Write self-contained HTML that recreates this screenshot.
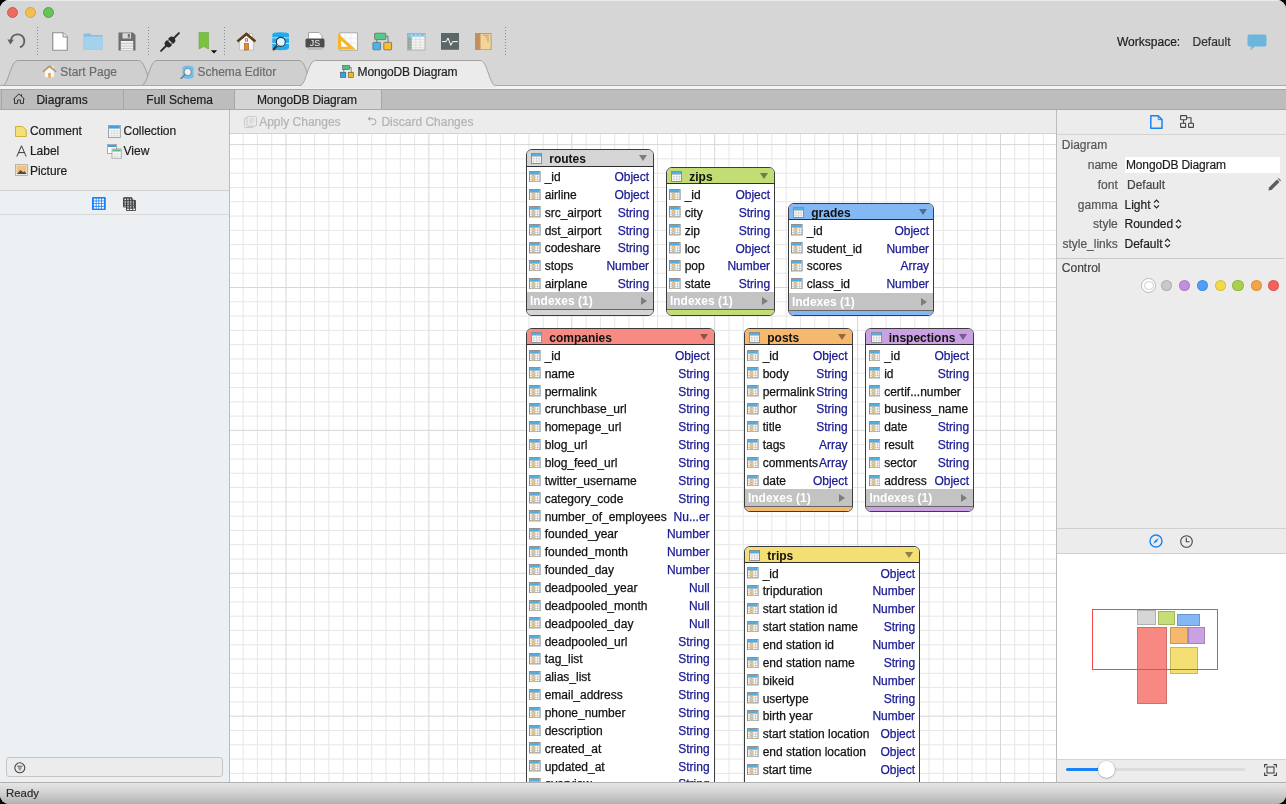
<!DOCTYPE html>
<html><head><meta charset="utf-8">
<style>
*{margin:0;padding:0;box-sizing:border-box}
html,body{width:1286px;height:804px;overflow:hidden;background:#000}
body{font-family:"Liberation Sans", sans-serif;font-size:12px;color:#222;position:relative}
.abs{position:absolute}
#win{position:absolute;left:0;top:0;width:1286px;height:804px;background:#d6d6d6;border-radius:9px;overflow:hidden;will-change:transform}
.tbl{position:absolute;background:#fff;border:1.5px solid #3c3c3c;border-radius:6px;overflow:hidden}
.hdr{position:absolute;left:0;top:0;right:0;border-bottom:1.2px solid #2e2e2e}
.htxt{position:absolute;font-weight:bold;font-size:12px;color:#111;padding-top:1px}
.tri{position:absolute;width:0;height:0;border-left:4px solid transparent;border-right:4px solid transparent;border-top:6px solid #777}
.rtxt,.rtyp{position:absolute;line-height:17.86px;font-size:12px;white-space:nowrap;padding-top:1.6px;-webkit-text-stroke:0.25px currentColor}
.rtxt{color:#111}
.rtyp{color:#1a1a92}
.idx{position:absolute;left:0;right:0;background:#c3c3c3;color:#fff;font-weight:bold;font-size:12px;line-height:18px;padding-left:3.2px;border-bottom:1px solid #666}
.itri{position:absolute;width:0;height:0;border-top:4px solid transparent;border-bottom:4px solid transparent;border-left:6px solid #7d7d7d}
.strip{position:absolute;left:0;right:0;height:6px}
.t13{font-size:12px}
#win div.abs{-webkit-text-stroke:0.2px currentColor}
</style></head><body>

<div id="win">

<div class="abs" style="left:0;top:0;width:1286px;height:60px;background:#d6d6d6"></div>
<div class="abs" style="left:0;top:0;width:1286px;height:1.2px;background:#ececec"></div>
<div class="abs" style="left:6.8999999999999995px;top:6.8px;width:11.6px;height:11.6px;border-radius:50%;background:#ee6a5f;border:0.5px solid #d55a50"></div>
<div class="abs" style="left:24.7px;top:6.8px;width:11.6px;height:11.6px;border-radius:50%;background:#f5be4f;border:0.5px solid #d9a43f"></div>
<div class="abs" style="left:42.5px;top:6.8px;width:11.6px;height:11.6px;border-radius:50%;background:#62c555;border:0.5px solid #51a846"></div>
<div class="abs" style="left:37.0px;top:27px;width:1px;height:28px;background:repeating-linear-gradient(#8a8a8a 0 1px,transparent 1px 3px)"></div>
<div class="abs" style="left:147.5px;top:27px;width:1px;height:28px;background:repeating-linear-gradient(#8a8a8a 0 1px,transparent 1px 3px)"></div>
<div class="abs" style="left:224.2px;top:27px;width:1px;height:28px;background:repeating-linear-gradient(#8a8a8a 0 1px,transparent 1px 3px)"></div>
<div class="abs" style="left:504.9px;top:27px;width:1px;height:28px;background:repeating-linear-gradient(#8a8a8a 0 1px,transparent 1px 3px)"></div>

<svg class="abs" style="left:6px;top:32px" width="21" height="18" viewBox="0 0 21 18">
 <path d="M5.0 8.0 A6.7 6.7 0 1 1 14.0 15.3" fill="none" stroke="#5f5f5f" stroke-width="1.9"/>
 <path d="M1.4 7.6 L7.8 7.8 L4.4 12.6 Z" fill="#5f5f5f"/>
</svg>
<svg class="abs" style="left:52px;top:32px" width="16" height="19" viewBox="0 0 16 19">
 <path d="M0.75 0.75 H11 L15.25 5 V18.25 H0.75 Z" fill="#fff" stroke="#8f8f8f" stroke-width="1.2"/>
 <path d="M11 0.75 V5 H15.25" fill="#f2f2f2" stroke="#8f8f8f" stroke-width="1"/>
</svg>
<svg class="abs" style="left:83px;top:33px" width="20" height="17" viewBox="0 0 20 17">
 <path d="M0.5 1.5 Q0.5 0.5 1.5 0.5 H7 L8.5 2 H18.5 Q19.5 2 19.5 3 V15.8 Q19.5 16.8 18.5 16.8 H1.5 Q0.5 16.8 0.5 15.8 Z" fill="#86bfe0"/>
 <path d="M0.5 3.6 H19.5 V15.8 Q19.5 16.8 18.5 16.8 H1.5 Q0.5 16.8 0.5 15.8 Z" fill="#a4d2ec"/>
</svg>
<svg class="abs" style="left:118px;top:32px" width="18" height="19" viewBox="0 0 18 19">
 <path d="M0.5 0.5 H15 L17.5 3 V18.5 H0.5 Z" fill="#6e6e6e"/>
 <rect x="4.5" y="1.2" width="8.5" height="5.3" fill="#d8d8d8"/>
 <rect x="9.8" y="2" width="2" height="3.6" fill="#6e6e6e"/>
 <rect x="2.8" y="9" width="12.4" height="9.5" fill="#efefef"/>
 <path d="M3 11.5 H15 M3 14 H15 M3 16.5 H15" stroke="#c2c2c2" stroke-width="0.8"/>
</svg>
<svg class="abs" style="left:160px;top:32px" width="20" height="20" viewBox="0 0 20 20">
 <g transform="rotate(-45 10 10)">
  <path d="M-2.6 10 H5 M15 10 H22.6" stroke="#2b2b2b" stroke-width="1.9" stroke-linecap="round"/>
  <path d="M4.2 10 Q4.2 6.4 7.2 6.4 H9.4 V13.6 H7.2 Q4.2 13.6 4.2 10 Z" fill="#2b2b2b"/>
  <path d="M15.8 10 Q15.8 6.4 12.8 6.4 H10.8 V13.6 H12.8 Q15.8 13.6 15.8 10 Z" fill="#2b2b2b"/>
  <path d="M9.4 7.8 H10.4 M9.4 12.2 H10.4" stroke="#2b2b2b" stroke-width="0.9"/>
 </g>
</svg>
<svg class="abs" style="left:198px;top:32px" width="20" height="22" viewBox="0 0 20 22">
 <path d="M1 0.5 H10.5 V17 L5.75 14.5 L1 17 Z" fill="#7cc242" stroke="#6aa83a" stroke-width="0.6"/>
 <path d="M12.8 18.2 H19.2 L16 21.6 Z" fill="#111"/>
</svg>
<svg class="abs" style="left:236px;top:32px" width="21" height="19" viewBox="0 0 21 19">
 <rect x="13.3" y="1.3" width="3" height="4.2" fill="#fafafa" stroke="#b9a58f" stroke-width="0.6"/>
 <path d="M3.4 8.6 V18 H17.4 V8.6 L10.4 3 Z" fill="#f7f6f8" stroke="#c2ae98" stroke-width="0.7"/>
 <path d="M1.4 9.4 L10.4 2 L19.4 9.4" fill="none" stroke="#5e3d17" stroke-width="2.6" stroke-linejoin="miter"/>
 <rect x="8.5" y="11.5" width="4" height="6.5" fill="#f8880c" stroke="#8a5a2a" stroke-width="0.6"/>
 <rect x="9.3" y="6.8" width="2.3" height="2.3" fill="#fff" stroke="#8a6a4a" stroke-width="0.8"/>
</svg>
<svg class="abs" style="left:271px;top:32px" width="19" height="20" viewBox="0 0 19 20">
 <path d="M1.3 2.6 Q1.3 0.3 9.6 0.3 Q18 0.3 18 2.6 V5.3 H1.3 Z" fill="#20abee"/>
 <rect x="1.3" y="6.3" width="16.7" height="4.6" fill="#20abee"/>
 <path d="M1.3 12 H18 V15.8 Q18 18.3 9.6 18.3 Q1.3 18.3 1.3 15.8 Z" fill="#20abee"/>
 <circle cx="9.8" cy="9.9" r="4.5" fill="#e3f3fb" stroke="#1f3a4c" stroke-width="1.1"/>
 <path d="M6.2 13.5 L2.6 17.4" stroke="#383838" stroke-width="2.3" stroke-linecap="round"/>
 <circle cx="6.5" cy="13.2" r="0.8" fill="#d9c24a"/>
</svg>
<svg class="abs" style="left:305px;top:32px" width="20" height="19" viewBox="0 0 20 19">
 <path d="M3.5 0.5 H14 L17 3.5 V17.5 H3.5 Z" fill="#fff" stroke="#9c9c9c" stroke-width="0.9"/>
 <rect x="0.5" y="6.5" width="19" height="9" rx="1.5" fill="#4c4c4c"/>
 <rect x="3.5" y="15.5" width="13.5" height="2.5" fill="#bdbdbd"/>
 <text x="10" y="14.4" font-family="Liberation Sans" font-size="8.8" fill="#f4f4f4" text-anchor="middle">JS</text>
</svg>
<svg class="abs" style="left:337px;top:32px" width="21" height="19" viewBox="0 0 21 19">
 <rect x="3" y="0.8" width="17.4" height="17.4" fill="#fdfdfd" stroke="#a5a5a5" stroke-width="0.9"/>
 <path d="M3 6 H20 M3 11 H20 M8 1 V18 M14 1 V18" stroke="#e6e6e6" stroke-width="0.6"/>
 <path d="M1 1.5 L18.8 17.6 H1 Z" fill="#f4b72a"/>
 <path d="M4.2 8.5 L11 14.8 H4.2 Z" fill="#fdfdfd"/>
</svg>
<svg class="abs" style="left:372px;top:32px" width="21" height="19" viewBox="0 0 21 19">
 <path d="M4.8 7.5 V10.5 M14 4.2 H16 V10.5" stroke="#6a6a6a" stroke-width="0.9" fill="none"/>
 <rect x="2.6" y="1.2" width="11.2" height="6.4" rx="0.8" fill="#57c98a" stroke="#6a6a6a" stroke-width="0.8"/>
 <rect x="0.9" y="10.4" width="7.6" height="7.4" rx="0.6" fill="#3db8f2" stroke="#6a6a6a" stroke-width="0.8"/>
 <rect x="11.8" y="10.4" width="7.8" height="7.4" rx="0.6" fill="#fbbd2a" stroke="#6a6a6a" stroke-width="0.8"/>
</svg>
<svg class="abs" style="left:407px;top:33px" width="18.5" height="17.5" viewBox="0 0 18.5 17.5">
 <rect x="0.5" y="0.5" width="17.5" height="16.5" fill="#f4f4f4" stroke="#a9a9a9" stroke-width="0.9"/>
 <rect x="1" y="1" width="16.5" height="2.6" fill="#7ec3ea"/>
 <path d="M4.6 1 V16.8 M8.8 1 V16.8 M13 1 V16.8" stroke="#c8c8c8" stroke-width="0.5"/>
 <path d="M4.6 1.2 V3.4 M8.8 1.2 V3.4 M13 1.2 V3.4" stroke="#d8ecf8" stroke-width="0.6"/>
 <path d="M1 6.4 H17.5 M1 9.2 H17.5 M1 12 H17.5 M1 14.6 H17.5" stroke="#d2d2d2" stroke-width="0.5"/>
 <rect x="1" y="3.6" width="3.6" height="13.2" fill="#9d9d9d"/>
 <path d="M1.8 5 H3.8 M1.8 7.8 H3.8 M1.8 10.6 H3.8 M1.8 13.3 H3.8 M1.8 15.8 H3.8" stroke="#79d39b" stroke-width="1.3"/>
</svg>
<svg class="abs" style="left:441px;top:33px" width="18" height="17" viewBox="0 0 18 17">
 <rect x="0" y="0" width="18" height="16.8" fill="#5c6868"/>
 <path d="M1.2 8.6 H5.2 L7 5 L9.8 12.3 L11.6 8.6 H16.8" stroke="#fff" stroke-width="1" fill="none" stroke-linejoin="round"/>
</svg>
<svg class="abs" style="left:475px;top:33px" width="16.5" height="17.2" viewBox="0 0 16.5 17.2">
 <rect x="0.4" y="0.4" width="15.7" height="16.4" fill="#f6d498" stroke="#9c8b74" stroke-width="0.7"/>
 <rect x="0.4" y="0.4" width="4.2" height="16.4" fill="#c48e58"/>
 <path d="M5 0.6 V16.6" stroke="#8e6a44" stroke-width="0.6"/>
 <path d="M8 2.2 H14 M10.5 4.2 H14 M11.5 6.2 H14 M12 8.2 H14" stroke="#9a7e52" stroke-width="0.6"/>
</svg>
<svg class="abs" style="left:1247px;top:34px" width="20" height="17" viewBox="0 0 20 17">
 <path d="M2.5 0.5 H17.5 Q19.5 0.5 19.5 2.5 V10.5 Q19.5 12.5 17.5 12.5 H8 L3 16.5 L4.5 12.5 H2.5 Q0.5 12.5 0.5 10.5 V2.5 Q0.5 0.5 2.5 0.5 Z" fill="#6cb6dd"/>
</svg>

<div class="abs" style="left:1117px;top:35px;font-size:12px;color:#1c1c1c;line-height:14px">Workspace:</div>
<div class="abs" style="left:1192.5px;top:35px;font-size:12px;color:#333;line-height:14px">Default</div>
<div class="abs" style="left:0;top:60px;width:1286px;height:27px;background:#d6d6d6"></div>
<svg class="abs" style="left:0;top:0" width="1286" height="90" viewBox="0 0 1286 90"><path d="M2.5 85.5 C8.5 85.5 10.5 60.5 18.0 60.5 H138.5 C146.0 60.5 148.0 85.5 154.0 85.5" fill="#cfcfcf" stroke="#9d9d9d" stroke-width="1"/><path d="M141.5 85.5 C147.5 85.5 149.5 60.5 157.0 60.5 H299 C306.5 60.5 308.5 85.5 314.5 85.5" fill="#cfcfcf" stroke="#9d9d9d" stroke-width="1"/><rect x="0" y="85" width="1286" height="1" fill="#a9a9a9"/><rect x="0" y="86" width="1286" height="3" fill="#f3f3f3"/><path d="M300 85.5 C306 85.5 308 60.5 315.5 60.5 H480 C487.5 60.5 489.5 85.5 495.5 85.5 V88 H300 Z" fill="#ebebeb" stroke="none"/><path d="M300 85.5 C306 85.5 308 60.5 315.5 60.5 H480 C487.5 60.5 489.5 85.5 495.5 85.5" fill="none" stroke="#a3a3a3" stroke-width="1"/></svg>
<svg class="abs" style="left:42px;top:65px" width="15" height="13" viewBox="0 0 15 13">
 <rect x="10.2" y="0.8" width="1.8" height="3" fill="#fff" stroke="#c8b9a8" stroke-width="0.4"/>
 <path d="M2.6 6.2 V12.5 H12.4 V6.2 L7.5 2.2 Z" fill="#f8f6f3" stroke="#d8c9b8" stroke-width="0.6"/>
 <path d="M0.8 6.8 L7.5 1.2 L14.2 6.8" fill="none" stroke="#b89570" stroke-width="1.5" stroke-linejoin="round"/>
 <rect x="6.2" y="8" width="2.6" height="4.5" fill="#e8a24a"/>
</svg>
<div class="abs" style="left:60.3px;top:66.3px;font-size:12px;color:#6b6b6b;line-height:13px">Start Page</div>
<svg class="abs" style="left:180px;top:64.8px" width="14" height="14" viewBox="0 0 14 14">
 <ellipse cx="8" cy="2.8" rx="5.5" ry="2.3" fill="#74bfe6"/>
 <rect x="2.5" y="2.8" width="11" height="8.8" fill="#74bfe6"/>
 <ellipse cx="8" cy="11.6" rx="5.5" ry="2.3" fill="#74bfe6"/>
 <circle cx="7.7" cy="7" r="3.7" fill="#e6f3fa" stroke="#6b7f8c" stroke-width="0.9"/>
 <path d="M5 9.8 L1 13.5" stroke="#6b7f8c" stroke-width="1.5" stroke-linecap="round"/>
</svg>
<div class="abs" style="left:197.5px;top:66.3px;font-size:12px;color:#6b6b6b;line-height:13px">Schema Editor</div>
<svg class="abs" style="left:340px;top:65px" width="14" height="13" viewBox="0 0 14 13">
 <path d="M3.8 4.5 V7.5 M9.5 2.5 H11.2 V7.5" stroke="#555" stroke-width="0.7" fill="none"/>
 <rect x="2.6" y="0.4" width="7" height="4.2" fill="#4fc07c" stroke="#444" stroke-width="0.5"/>
 <rect x="0.4" y="7.2" width="5.4" height="5.4" fill="#2aa4ea" stroke="#444" stroke-width="0.5"/>
 <rect x="8.2" y="7.2" width="5.4" height="5.4" fill="#f6b520" stroke="#444" stroke-width="0.5"/>
</svg>
<div class="abs" style="left:357.6px;top:66.3px;font-size:12px;color:#262626;line-height:13px;letter-spacing:-0.15px">MongoDB Diagram</div>
<div class="abs" style="left:0;top:89px;width:1286px;height:21px;background:#bdbdbd;border-top:1px solid #a8a8a8;border-bottom:1px solid #a9a9a9"></div>
<div class="abs" style="left:234px;top:90px;width:146.5px;height:19px;background:#d4d4d4"></div>
<div class="abs" style="left:0.5px;top:90px;width:1px;height:19px;background:#a6a6a6"></div>
<div class="abs" style="left:122.5px;top:90px;width:1px;height:19px;background:#a6a6a6"></div>
<div class="abs" style="left:234px;top:90px;width:1px;height:19px;background:#a6a6a6"></div>
<div class="abs" style="left:380.5px;top:90px;width:1px;height:19px;background:#a6a6a6"></div>
<svg class="abs" style="left:13px;top:93px" width="12" height="11" viewBox="0 0 12 11">
 <path d="M1.5 5.5 V10.4 H4.6 V7 H7.4 V10.4 H10.5 V5.5 M0.4 6.2 L6 0.9 L11.6 6.2 M8.5 1.2 V3.2" fill="none" stroke="#333" stroke-width="1" stroke-linejoin="round"/>
</svg>
<div class="abs" style="left:36.4px;top:94px;font-size:12px;color:#1e1e1e;line-height:13px">Diagrams</div>
<div class="abs" style="left:146.3px;top:94px;font-size:12px;color:#1e1e1e;line-height:13px">Full Schema</div>
<div class="abs" style="left:257px;top:94px;font-size:12px;color:#1e1e1e;line-height:13px;letter-spacing:-0.15px">MongoDB Diagram</div>
<div class="abs" style="left:0;top:110px;width:229px;height:81px;background:#ececec"></div>
<div class="abs" style="left:0;top:190px;width:229px;height:1px;background:#d0d0d0"></div>
<div class="abs" style="left:0;top:191px;width:229px;height:23px;background:#ecf0f3"></div>
<div class="abs" style="left:0;top:214px;width:229px;height:1px;background:#d6d8da"></div>
<div class="abs" style="left:0;top:215px;width:229px;height:567px;background:#ecf0f3"></div>
<div class="abs" style="left:229px;top:110px;width:1px;height:672px;background:#bcbcbc"></div>
<svg class="abs" style="left:15px;top:126px" width="12" height="11" viewBox="0 0 12 11">
 <path d="M0.5 0.5 H7.8 L11.3 4 V10.5 H0.5 Z" fill="#f4e07a" stroke="#c8ad2c" stroke-width="0.9"/>
</svg>
<div class="abs" style="left:29.9px;top:125px;font-size:12px;color:#1e1e1e;line-height:13px">Comment</div>
<svg class="abs" style="left:107.5px;top:124.5px" width="13" height="13" viewBox="0 0 13 13">
 <rect x="0.5" y="0.5" width="11.8" height="12" fill="#fff" stroke="#999" stroke-width="0.9"/>
 <rect x="1" y="1" width="10.8" height="2.6" fill="#3ea0e6"/>
 <path d="M1 6 H12 M1 8.4 H12 M1 10.8 H12 M3.8 3.6 V12.5 M6.4 3.6 V12.5 M9.1 3.6 V12.5" stroke="#c9c9c9" stroke-width="0.6"/>
</svg>
<div class="abs" style="left:123.5px;top:125px;font-size:12px;color:#1e1e1e;line-height:13px">Collection</div>
<svg class="abs" style="left:15.5px;top:144.5px" width="11" height="12" viewBox="0 0 11 12">
 <path d="M0.8 11.5 L5.5 0.8 L10.2 11.5 M2.6 7.6 H8.4" fill="none" stroke="#3a3a3a" stroke-width="1"/>
</svg>
<div class="abs" style="left:29.9px;top:145px;font-size:12px;color:#1e1e1e;line-height:13px">Label</div>
<svg class="abs" style="left:107px;top:143.5px" width="15" height="15" viewBox="0 0 15 15">
 <rect x="0.5" y="0.5" width="9" height="9" fill="#fff" stroke="#999" stroke-width="0.8"/>
 <rect x="1" y="1" width="8" height="2" fill="#3ea0e6"/>
 <rect x="5" y="5" width="9.2" height="9.2" fill="#fff" stroke="#999" stroke-width="0.8"/>
 <rect x="5.5" y="5.5" width="8.2" height="2" fill="#5cb87a"/>
 <path d="M5.5 10 H14 M5.5 12.2 H14 M8 7.5 V14 M10.8 7.5 V14" stroke="#c9c9c9" stroke-width="0.5"/>
</svg>
<div class="abs" style="left:123.5px;top:145px;font-size:12px;color:#1e1e1e;line-height:13px">View</div>
<svg class="abs" style="left:14.5px;top:164px" width="13" height="12" viewBox="0 0 13 12">
 <rect x="0.5" y="0.5" width="12" height="11" fill="#e9e9e9" stroke="#aaa" stroke-width="0.8"/>
 <rect x="1.5" y="1.5" width="10" height="8.5" fill="#f5c27a"/>
 <path d="M2 10 L5.5 6 L8 8.3 L9.5 7.2 L11.5 10 Z" fill="#4a4a4a"/>
</svg>
<div class="abs" style="left:29.9px;top:165px;font-size:12px;color:#1e1e1e;line-height:13px">Picture</div>
<svg class="abs" style="left:92px;top:196.8px" width="14" height="13.2" viewBox="0 0 14 13.2"><rect x="0" y="0" width="13.8" height="13.2" rx="0.8" fill="#1a82f7"/><rect x="1.85" y="1.65" width="1.9" height="1.9" fill="#fff"/><rect x="1.85" y="4.35" width="1.9" height="1.9" fill="#fff"/><rect x="1.85" y="6.95" width="1.9" height="1.9" fill="#fff"/><rect x="1.85" y="9.75" width="1.9" height="1.9" fill="#fff"/><rect x="4.55" y="1.65" width="1.9" height="1.9" fill="#fff"/><rect x="4.55" y="4.35" width="1.9" height="1.9" fill="#fff"/><rect x="4.55" y="6.95" width="1.9" height="1.9" fill="#fff"/><rect x="4.55" y="9.75" width="1.9" height="1.9" fill="#fff"/><rect x="7.25" y="1.65" width="1.9" height="1.9" fill="#fff"/><rect x="7.25" y="4.35" width="1.9" height="1.9" fill="#fff"/><rect x="7.25" y="6.95" width="1.9" height="1.9" fill="#fff"/><rect x="7.25" y="9.75" width="1.9" height="1.9" fill="#fff"/><rect x="10.05" y="1.65" width="1.9" height="1.9" fill="#fff"/><rect x="10.05" y="4.35" width="1.9" height="1.9" fill="#fff"/><rect x="10.05" y="6.95" width="1.9" height="1.9" fill="#fff"/><rect x="10.05" y="9.75" width="1.9" height="1.9" fill="#fff"/></svg>
<svg class="abs" style="left:123px;top:197.3px" width="13" height="12" viewBox="0 0 13 12"><rect x="0.3" y="0.2" width="9" height="9" rx="1" fill="#4d4d4d"/><rect x="1.50" y="1.40" width="1.7" height="1.7" fill="#e9ecef"/><rect x="1.50" y="3.95" width="1.7" height="1.7" fill="#e9ecef"/><rect x="1.50" y="6.50" width="1.7" height="1.7" fill="#e9ecef"/><rect x="4.05" y="1.40" width="1.7" height="1.7" fill="#e9ecef"/><rect x="4.05" y="3.95" width="1.7" height="1.7" fill="#e9ecef"/><rect x="4.05" y="6.50" width="1.7" height="1.7" fill="#e9ecef"/><rect x="6.60" y="1.40" width="1.7" height="1.7" fill="#e9ecef"/><rect x="6.60" y="3.95" width="1.7" height="1.7" fill="#e9ecef"/><rect x="6.60" y="6.50" width="1.7" height="1.7" fill="#e9ecef"/><rect x="3.0" y="2.7" width="9" height="9" rx="1" fill="#4d4d4d"/><rect x="4.20" y="3.90" width="1.7" height="1.7" fill="#e9ecef"/><rect x="4.20" y="6.45" width="1.7" height="1.7" fill="#e9ecef"/><rect x="4.20" y="9.00" width="1.7" height="1.7" fill="#e9ecef"/><rect x="6.75" y="3.90" width="1.7" height="1.7" fill="#e9ecef"/><rect x="6.75" y="6.45" width="1.7" height="1.7" fill="#e9ecef"/><rect x="6.75" y="9.00" width="1.7" height="1.7" fill="#e9ecef"/><rect x="9.30" y="3.90" width="1.7" height="1.7" fill="#e9ecef"/><rect x="9.30" y="6.45" width="1.7" height="1.7" fill="#e9ecef"/><rect x="9.30" y="9.00" width="1.7" height="1.7" fill="#e9ecef"/></svg>
<svg class="abs" style="left:123px;top:196.5px" width="13" height="14" viewBox="0 0 13 14">
 <path d="M0.5 1 H9 V3.5 H12.5 V13.5 H3.5 V10 H0.5 Z" fill="none" stroke="#444" stroke-width="0.9"/>
 <path d="M0.5 4 H12.5 M0.5 7 H12.5 M3.5 10 H12.5 M3.5 1 V13.5 M6.5 1 V13.5 M9.5 3.5 V13.5" stroke="#444" stroke-width="0.8"/>
</svg>
<div class="abs" style="left:6px;top:757px;width:217px;height:19.5px;background:#ececec;border:1px solid #c6c6c6;border-radius:3px"></div>
<svg class="abs" style="left:13.5px;top:761.5px" width="12" height="12" viewBox="0 0 12 12">
 <circle cx="5.8" cy="5.8" r="5" fill="none" stroke="#444" stroke-width="1.1"/>
 <path d="M3.2 4.2 H8.4 M4 6 H7.6 M4.9 7.8 H6.7" stroke="#444" stroke-width="0.9"/>
</svg>
<div class="abs" style="left:230px;top:110px;width:826px;height:23px;background:#ececec"></div>
<div class="abs" style="left:230px;top:133px;width:826px;height:1px;background:#d2d2d2"></div>
<div class="abs" style="left:230px;top:134px;width:826px;height:648px;background:#fff"></div>
<svg class="abs" style="left:244px;top:116px" width="13" height="12" viewBox="0 0 13 12">
 <rect x="0.5" y="2" width="9" height="9.5" rx="1" fill="none" stroke="#c4c4c4" stroke-width="0.9"/>
 <rect x="3" y="0.5" width="9.5" height="9.5" rx="1" fill="#ececec" stroke="#c4c4c4" stroke-width="0.9"/>
 <path d="M5 3 H10.5 M5 5 H10.5 M5 7 H9" stroke="#c4c4c4" stroke-width="0.7"/>
</svg>
<div class="abs" style="left:259.2px;top:116px;font-size:12px;color:#b3b3b3;line-height:13px">Apply Changes</div>
<svg class="abs" style="left:367px;top:115.5px" width="10" height="10" viewBox="0 0 10 10">
 <path d="M2.2 2.8 H6 A3 3 0 0 1 6 8.8 H4.5" fill="none" stroke="#a6a6a6" stroke-width="1"/>
 <path d="M0.5 2.8 L3.2 0.6 V5 Z" fill="#a6a6a6"/>
</svg>
<div class="abs" style="left:381.4px;top:116px;font-size:12px;color:#b3b3b3;line-height:13px">Discard Changes</div>
<svg width="826" height="648" style="position:absolute;left:230px;top:134px"><line x1="13.13" y1="0" x2="13.13" y2="648" stroke="#e6e6e6" stroke-width="1"/><line x1="27.42" y1="0" x2="27.42" y2="648" stroke="#e6e6e6" stroke-width="1"/><line x1="41.71" y1="0" x2="41.71" y2="648" stroke="#e6e6e6" stroke-width="1"/><line x1="70.29" y1="0" x2="70.29" y2="648" stroke="#e6e6e6" stroke-width="1"/><line x1="84.58" y1="0" x2="84.58" y2="648" stroke="#e6e6e6" stroke-width="1"/><line x1="98.87" y1="0" x2="98.87" y2="648" stroke="#e6e6e6" stroke-width="1"/><line x1="113.16" y1="0" x2="113.16" y2="648" stroke="#e6e6e6" stroke-width="1"/><line x1="127.45" y1="0" x2="127.45" y2="648" stroke="#e6e6e6" stroke-width="1"/><line x1="141.74" y1="0" x2="141.74" y2="648" stroke="#e6e6e6" stroke-width="1"/><line x1="156.03" y1="0" x2="156.03" y2="648" stroke="#e6e6e6" stroke-width="1"/><line x1="170.32" y1="0" x2="170.32" y2="648" stroke="#e6e6e6" stroke-width="1"/><line x1="184.61" y1="0" x2="184.61" y2="648" stroke="#e6e6e6" stroke-width="1"/><line x1="213.19" y1="0" x2="213.19" y2="648" stroke="#e6e6e6" stroke-width="1"/><line x1="227.48" y1="0" x2="227.48" y2="648" stroke="#e6e6e6" stroke-width="1"/><line x1="241.77" y1="0" x2="241.77" y2="648" stroke="#e6e6e6" stroke-width="1"/><line x1="256.06" y1="0" x2="256.06" y2="648" stroke="#e6e6e6" stroke-width="1"/><line x1="270.35" y1="0" x2="270.35" y2="648" stroke="#e6e6e6" stroke-width="1"/><line x1="284.64" y1="0" x2="284.64" y2="648" stroke="#e6e6e6" stroke-width="1"/><line x1="298.93" y1="0" x2="298.93" y2="648" stroke="#e6e6e6" stroke-width="1"/><line x1="313.22" y1="0" x2="313.22" y2="648" stroke="#e6e6e6" stroke-width="1"/><line x1="327.51" y1="0" x2="327.51" y2="648" stroke="#e6e6e6" stroke-width="1"/><line x1="356.09" y1="0" x2="356.09" y2="648" stroke="#e6e6e6" stroke-width="1"/><line x1="370.38" y1="0" x2="370.38" y2="648" stroke="#e6e6e6" stroke-width="1"/><line x1="384.67" y1="0" x2="384.67" y2="648" stroke="#e6e6e6" stroke-width="1"/><line x1="398.96" y1="0" x2="398.96" y2="648" stroke="#e6e6e6" stroke-width="1"/><line x1="413.25" y1="0" x2="413.25" y2="648" stroke="#e6e6e6" stroke-width="1"/><line x1="427.54" y1="0" x2="427.54" y2="648" stroke="#e6e6e6" stroke-width="1"/><line x1="441.83" y1="0" x2="441.83" y2="648" stroke="#e6e6e6" stroke-width="1"/><line x1="456.12" y1="0" x2="456.12" y2="648" stroke="#e6e6e6" stroke-width="1"/><line x1="470.41" y1="0" x2="470.41" y2="648" stroke="#e6e6e6" stroke-width="1"/><line x1="498.99" y1="0" x2="498.99" y2="648" stroke="#e6e6e6" stroke-width="1"/><line x1="513.28" y1="0" x2="513.28" y2="648" stroke="#e6e6e6" stroke-width="1"/><line x1="527.57" y1="0" x2="527.57" y2="648" stroke="#e6e6e6" stroke-width="1"/><line x1="541.86" y1="0" x2="541.86" y2="648" stroke="#e6e6e6" stroke-width="1"/><line x1="556.15" y1="0" x2="556.15" y2="648" stroke="#e6e6e6" stroke-width="1"/><line x1="570.44" y1="0" x2="570.44" y2="648" stroke="#e6e6e6" stroke-width="1"/><line x1="584.73" y1="0" x2="584.73" y2="648" stroke="#e6e6e6" stroke-width="1"/><line x1="599.02" y1="0" x2="599.02" y2="648" stroke="#e6e6e6" stroke-width="1"/><line x1="613.31" y1="0" x2="613.31" y2="648" stroke="#e6e6e6" stroke-width="1"/><line x1="641.89" y1="0" x2="641.89" y2="648" stroke="#e6e6e6" stroke-width="1"/><line x1="656.18" y1="0" x2="656.18" y2="648" stroke="#e6e6e6" stroke-width="1"/><line x1="670.47" y1="0" x2="670.47" y2="648" stroke="#e6e6e6" stroke-width="1"/><line x1="684.76" y1="0" x2="684.76" y2="648" stroke="#e6e6e6" stroke-width="1"/><line x1="699.05" y1="0" x2="699.05" y2="648" stroke="#e6e6e6" stroke-width="1"/><line x1="713.34" y1="0" x2="713.34" y2="648" stroke="#e6e6e6" stroke-width="1"/><line x1="727.63" y1="0" x2="727.63" y2="648" stroke="#e6e6e6" stroke-width="1"/><line x1="741.92" y1="0" x2="741.92" y2="648" stroke="#e6e6e6" stroke-width="1"/><line x1="756.21" y1="0" x2="756.21" y2="648" stroke="#e6e6e6" stroke-width="1"/><line x1="784.79" y1="0" x2="784.79" y2="648" stroke="#e6e6e6" stroke-width="1"/><line x1="799.08" y1="0" x2="799.08" y2="648" stroke="#e6e6e6" stroke-width="1"/><line x1="813.37" y1="0" x2="813.37" y2="648" stroke="#e6e6e6" stroke-width="1"/><line x1="0" y1="24.89" x2="826" y2="24.89" stroke="#e6e6e6" stroke-width="1"/><line x1="0" y1="39.18" x2="826" y2="39.18" stroke="#e6e6e6" stroke-width="1"/><line x1="0" y1="53.47" x2="826" y2="53.47" stroke="#e6e6e6" stroke-width="1"/><line x1="0" y1="67.76" x2="826" y2="67.76" stroke="#e6e6e6" stroke-width="1"/><line x1="0" y1="82.05" x2="826" y2="82.05" stroke="#e6e6e6" stroke-width="1"/><line x1="0" y1="96.34" x2="826" y2="96.34" stroke="#e6e6e6" stroke-width="1"/><line x1="0" y1="110.63" x2="826" y2="110.63" stroke="#e6e6e6" stroke-width="1"/><line x1="0" y1="124.92" x2="826" y2="124.92" stroke="#e6e6e6" stroke-width="1"/><line x1="0" y1="139.21" x2="826" y2="139.21" stroke="#e6e6e6" stroke-width="1"/><line x1="0" y1="167.79" x2="826" y2="167.79" stroke="#e6e6e6" stroke-width="1"/><line x1="0" y1="182.08" x2="826" y2="182.08" stroke="#e6e6e6" stroke-width="1"/><line x1="0" y1="196.37" x2="826" y2="196.37" stroke="#e6e6e6" stroke-width="1"/><line x1="0" y1="210.66" x2="826" y2="210.66" stroke="#e6e6e6" stroke-width="1"/><line x1="0" y1="224.95" x2="826" y2="224.95" stroke="#e6e6e6" stroke-width="1"/><line x1="0" y1="239.24" x2="826" y2="239.24" stroke="#e6e6e6" stroke-width="1"/><line x1="0" y1="253.53" x2="826" y2="253.53" stroke="#e6e6e6" stroke-width="1"/><line x1="0" y1="267.82" x2="826" y2="267.82" stroke="#e6e6e6" stroke-width="1"/><line x1="0" y1="282.11" x2="826" y2="282.11" stroke="#e6e6e6" stroke-width="1"/><line x1="0" y1="310.69" x2="826" y2="310.69" stroke="#e6e6e6" stroke-width="1"/><line x1="0" y1="324.98" x2="826" y2="324.98" stroke="#e6e6e6" stroke-width="1"/><line x1="0" y1="339.27" x2="826" y2="339.27" stroke="#e6e6e6" stroke-width="1"/><line x1="0" y1="353.56" x2="826" y2="353.56" stroke="#e6e6e6" stroke-width="1"/><line x1="0" y1="367.85" x2="826" y2="367.85" stroke="#e6e6e6" stroke-width="1"/><line x1="0" y1="382.14" x2="826" y2="382.14" stroke="#e6e6e6" stroke-width="1"/><line x1="0" y1="396.43" x2="826" y2="396.43" stroke="#e6e6e6" stroke-width="1"/><line x1="0" y1="410.72" x2="826" y2="410.72" stroke="#e6e6e6" stroke-width="1"/><line x1="0" y1="425.01" x2="826" y2="425.01" stroke="#e6e6e6" stroke-width="1"/><line x1="0" y1="453.59" x2="826" y2="453.59" stroke="#e6e6e6" stroke-width="1"/><line x1="0" y1="467.88" x2="826" y2="467.88" stroke="#e6e6e6" stroke-width="1"/><line x1="0" y1="482.17" x2="826" y2="482.17" stroke="#e6e6e6" stroke-width="1"/><line x1="0" y1="496.46" x2="826" y2="496.46" stroke="#e6e6e6" stroke-width="1"/><line x1="0" y1="510.75" x2="826" y2="510.75" stroke="#e6e6e6" stroke-width="1"/><line x1="0" y1="525.04" x2="826" y2="525.04" stroke="#e6e6e6" stroke-width="1"/><line x1="0" y1="539.33" x2="826" y2="539.33" stroke="#e6e6e6" stroke-width="1"/><line x1="0" y1="553.62" x2="826" y2="553.62" stroke="#e6e6e6" stroke-width="1"/><line x1="0" y1="567.91" x2="826" y2="567.91" stroke="#e6e6e6" stroke-width="1"/><line x1="0" y1="596.49" x2="826" y2="596.49" stroke="#e6e6e6" stroke-width="1"/><line x1="0" y1="610.78" x2="826" y2="610.78" stroke="#e6e6e6" stroke-width="1"/><line x1="0" y1="625.07" x2="826" y2="625.07" stroke="#e6e6e6" stroke-width="1"/><line x1="0" y1="639.36" x2="826" y2="639.36" stroke="#e6e6e6" stroke-width="1"/><line x1="56.0" y1="0" x2="56.0" y2="648" stroke="#d7d7d7" stroke-width="1"/><line x1="198.9" y1="0" x2="198.9" y2="648" stroke="#d7d7d7" stroke-width="1"/><line x1="341.8" y1="0" x2="341.8" y2="648" stroke="#d7d7d7" stroke-width="1"/><line x1="484.7" y1="0" x2="484.7" y2="648" stroke="#d7d7d7" stroke-width="1"/><line x1="627.6" y1="0" x2="627.6" y2="648" stroke="#d7d7d7" stroke-width="1"/><line x1="770.5" y1="0" x2="770.5" y2="648" stroke="#d7d7d7" stroke-width="1"/><line x1="0" y1="10.6" x2="826" y2="10.6" stroke="#d7d7d7" stroke-width="1"/><line x1="0" y1="153.5" x2="826" y2="153.5" stroke="#d7d7d7" stroke-width="1"/><line x1="0" y1="296.4" x2="826" y2="296.4" stroke="#d7d7d7" stroke-width="1"/><line x1="0" y1="439.3" x2="826" y2="439.3" stroke="#d7d7d7" stroke-width="1"/><line x1="0" y1="582.2" x2="826" y2="582.2" stroke="#d7d7d7" stroke-width="1"/></svg>
<div class="tbl" style="left:525.75px;top:149.05px;width:128.5px;height:166.699px;">
<div class="hdr" style="background:#d5d5d5;height:16.5px"></div>
<svg width="11" height="11" viewBox="0 0 11 11" style="position:absolute;left:4.5px;top:3.2px"><rect x="0.5" y="0.5" width="10" height="10" fill="#fff" stroke="#8f8f8f" stroke-width="1"/><rect x="1" y="1" width="9" height="2.2" fill="#3aaef0"/><path d="M1 3.35H10" stroke="#9a9a9a" stroke-width="0.5"/><path d="M1 5.8H10M1 8.2H10" stroke="#c4c4c4" stroke-width="0.55"/><path d="M2.85 1V10M5.65 1V10M8.2 1V10" stroke="#b4b4b4" stroke-width="0.5"/></svg>
<div class="htxt" style="left:22.5px;top:0px;line-height:17.0px">routes</div>
<div class="tri" style="left:112.5px;top:5px;border-top-color:#7d7d7d"></div>
<svg width="11.6" height="11.4" viewBox="0 0 11 11" preserveAspectRatio="none" style="position:absolute;left:2.3px;top:20.7px"><rect x="0.5" y="0.5" width="10" height="10" fill="#fff" stroke="#8f8f8f" stroke-width="1"/><rect x="1" y="1" width="9" height="2.2" fill="#3aaef0"/><rect x="3.1" y="3.7" width="2.3" height="1.8" fill="#efb645"/><rect x="3.1" y="6.1" width="2.3" height="1.8" fill="#efb645"/><rect x="3.1" y="8.5" width="2.3" height="1.5" fill="#efb645"/><path d="M1 3.35H10" stroke="#9a9a9a" stroke-width="0.5"/><path d="M1 5.8H10M1 8.2H10" stroke="#bdbdbd" stroke-width="0.55"/><path d="M2.85 1V10M5.65 1V10M8.2 1V10" stroke="#a9a9a9" stroke-width="0.5"/></svg>
<div class="rtxt" style="top:17.40px;left:17.9px">_id</div>
<div class="rtyp" style="top:17.40px;right:4.2px">Object</div>
<svg width="11.6" height="11.4" viewBox="0 0 11 11" preserveAspectRatio="none" style="position:absolute;left:2.3px;top:38.56px"><rect x="0.5" y="0.5" width="10" height="10" fill="#fff" stroke="#8f8f8f" stroke-width="1"/><rect x="1" y="1" width="9" height="2.2" fill="#3aaef0"/><rect x="3.1" y="3.7" width="2.3" height="1.8" fill="#efb645"/><rect x="3.1" y="6.1" width="2.3" height="1.8" fill="#efb645"/><rect x="3.1" y="8.5" width="2.3" height="1.5" fill="#efb645"/><path d="M1 3.35H10" stroke="#9a9a9a" stroke-width="0.5"/><path d="M1 5.8H10M1 8.2H10" stroke="#bdbdbd" stroke-width="0.55"/><path d="M2.85 1V10M5.65 1V10M8.2 1V10" stroke="#a9a9a9" stroke-width="0.5"/></svg>
<div class="rtxt" style="top:35.26px;left:17.9px">airline</div>
<div class="rtyp" style="top:35.26px;right:4.2px">Object</div>
<svg width="11.6" height="11.4" viewBox="0 0 11 11" preserveAspectRatio="none" style="position:absolute;left:2.3px;top:56.41px"><rect x="0.5" y="0.5" width="10" height="10" fill="#fff" stroke="#8f8f8f" stroke-width="1"/><rect x="1" y="1" width="9" height="2.2" fill="#3aaef0"/><rect x="3.1" y="3.7" width="2.3" height="1.8" fill="#efb645"/><rect x="3.1" y="6.1" width="2.3" height="1.8" fill="#efb645"/><rect x="3.1" y="8.5" width="2.3" height="1.5" fill="#efb645"/><path d="M1 3.35H10" stroke="#9a9a9a" stroke-width="0.5"/><path d="M1 5.8H10M1 8.2H10" stroke="#bdbdbd" stroke-width="0.55"/><path d="M2.85 1V10M5.65 1V10M8.2 1V10" stroke="#a9a9a9" stroke-width="0.5"/></svg>
<div class="rtxt" style="top:53.11px;left:17.9px">src_airport</div>
<div class="rtyp" style="top:53.11px;right:4.2px">String</div>
<svg width="11.6" height="11.4" viewBox="0 0 11 11" preserveAspectRatio="none" style="position:absolute;left:2.3px;top:74.27px"><rect x="0.5" y="0.5" width="10" height="10" fill="#fff" stroke="#8f8f8f" stroke-width="1"/><rect x="1" y="1" width="9" height="2.2" fill="#3aaef0"/><rect x="3.1" y="3.7" width="2.3" height="1.8" fill="#efb645"/><rect x="3.1" y="6.1" width="2.3" height="1.8" fill="#efb645"/><rect x="3.1" y="8.5" width="2.3" height="1.5" fill="#efb645"/><path d="M1 3.35H10" stroke="#9a9a9a" stroke-width="0.5"/><path d="M1 5.8H10M1 8.2H10" stroke="#bdbdbd" stroke-width="0.55"/><path d="M2.85 1V10M5.65 1V10M8.2 1V10" stroke="#a9a9a9" stroke-width="0.5"/></svg>
<div class="rtxt" style="top:70.97px;left:17.9px">dst_airport</div>
<div class="rtyp" style="top:70.97px;right:4.2px">String</div>
<svg width="11.6" height="11.4" viewBox="0 0 11 11" preserveAspectRatio="none" style="position:absolute;left:2.3px;top:92.13px"><rect x="0.5" y="0.5" width="10" height="10" fill="#fff" stroke="#8f8f8f" stroke-width="1"/><rect x="1" y="1" width="9" height="2.2" fill="#3aaef0"/><rect x="3.1" y="3.7" width="2.3" height="1.8" fill="#efb645"/><rect x="3.1" y="6.1" width="2.3" height="1.8" fill="#efb645"/><rect x="3.1" y="8.5" width="2.3" height="1.5" fill="#efb645"/><path d="M1 3.35H10" stroke="#9a9a9a" stroke-width="0.5"/><path d="M1 5.8H10M1 8.2H10" stroke="#bdbdbd" stroke-width="0.55"/><path d="M2.85 1V10M5.65 1V10M8.2 1V10" stroke="#a9a9a9" stroke-width="0.5"/></svg>
<div class="rtxt" style="top:88.83px;left:17.9px">codeshare</div>
<div class="rtyp" style="top:88.83px;right:4.2px">String</div>
<svg width="11.6" height="11.4" viewBox="0 0 11 11" preserveAspectRatio="none" style="position:absolute;left:2.3px;top:109.98px"><rect x="0.5" y="0.5" width="10" height="10" fill="#fff" stroke="#8f8f8f" stroke-width="1"/><rect x="1" y="1" width="9" height="2.2" fill="#3aaef0"/><rect x="3.1" y="3.7" width="2.3" height="1.8" fill="#efb645"/><rect x="3.1" y="6.1" width="2.3" height="1.8" fill="#efb645"/><rect x="3.1" y="8.5" width="2.3" height="1.5" fill="#efb645"/><path d="M1 3.35H10" stroke="#9a9a9a" stroke-width="0.5"/><path d="M1 5.8H10M1 8.2H10" stroke="#bdbdbd" stroke-width="0.55"/><path d="M2.85 1V10M5.65 1V10M8.2 1V10" stroke="#a9a9a9" stroke-width="0.5"/></svg>
<div class="rtxt" style="top:106.69px;left:17.9px">stops</div>
<div class="rtyp" style="top:106.69px;right:4.2px">Number</div>
<svg width="11.6" height="11.4" viewBox="0 0 11 11" preserveAspectRatio="none" style="position:absolute;left:2.3px;top:127.84px"><rect x="0.5" y="0.5" width="10" height="10" fill="#fff" stroke="#8f8f8f" stroke-width="1"/><rect x="1" y="1" width="9" height="2.2" fill="#3aaef0"/><rect x="3.1" y="3.7" width="2.3" height="1.8" fill="#efb645"/><rect x="3.1" y="6.1" width="2.3" height="1.8" fill="#efb645"/><rect x="3.1" y="8.5" width="2.3" height="1.5" fill="#efb645"/><path d="M1 3.35H10" stroke="#9a9a9a" stroke-width="0.5"/><path d="M1 5.8H10M1 8.2H10" stroke="#bdbdbd" stroke-width="0.55"/><path d="M2.85 1V10M5.65 1V10M8.2 1V10" stroke="#a9a9a9" stroke-width="0.5"/></svg>
<div class="rtxt" style="top:124.54px;left:17.9px">airplane</div>
<div class="rtyp" style="top:124.54px;right:4.2px">String</div>
<div class="idx" style="top:142.40px;height:18px"><span>Indexes (1)</span></div>
<div class="itri" style="left:114.0px;top:147.399px"></div>
<div class="strip" style="top:160.399px;background:#d5d5d5"></div>
</div>
<div class="tbl" style="left:665.75px;top:166.95px;width:109.5px;height:148.84199999999998px;">
<div class="hdr" style="background:#c2dd74;height:16.5px"></div>
<svg width="11" height="11" viewBox="0 0 11 11" style="position:absolute;left:4.5px;top:3.2px"><rect x="0.5" y="0.5" width="10" height="10" fill="#fff" stroke="#8f8f8f" stroke-width="1"/><rect x="1" y="1" width="9" height="2.2" fill="#3aaef0"/><path d="M1 3.35H10" stroke="#9a9a9a" stroke-width="0.5"/><path d="M1 5.8H10M1 8.2H10" stroke="#c4c4c4" stroke-width="0.55"/><path d="M2.85 1V10M5.65 1V10M8.2 1V10" stroke="#b4b4b4" stroke-width="0.5"/></svg>
<div class="htxt" style="left:22.5px;top:0px;line-height:17.0px">zips</div>
<div class="tri" style="left:93.5px;top:5px;border-top-color:#6f7f43"></div>
<svg width="11.6" height="11.4" viewBox="0 0 11 11" preserveAspectRatio="none" style="position:absolute;left:2.3px;top:20.7px"><rect x="0.5" y="0.5" width="10" height="10" fill="#fff" stroke="#8f8f8f" stroke-width="1"/><rect x="1" y="1" width="9" height="2.2" fill="#3aaef0"/><rect x="3.1" y="3.7" width="2.3" height="1.8" fill="#efb645"/><rect x="3.1" y="6.1" width="2.3" height="1.8" fill="#efb645"/><rect x="3.1" y="8.5" width="2.3" height="1.5" fill="#efb645"/><path d="M1 3.35H10" stroke="#9a9a9a" stroke-width="0.5"/><path d="M1 5.8H10M1 8.2H10" stroke="#bdbdbd" stroke-width="0.55"/><path d="M2.85 1V10M5.65 1V10M8.2 1V10" stroke="#a9a9a9" stroke-width="0.5"/></svg>
<div class="rtxt" style="top:17.40px;left:17.9px">_id</div>
<div class="rtyp" style="top:17.40px;right:4.2px">Object</div>
<svg width="11.6" height="11.4" viewBox="0 0 11 11" preserveAspectRatio="none" style="position:absolute;left:2.3px;top:38.56px"><rect x="0.5" y="0.5" width="10" height="10" fill="#fff" stroke="#8f8f8f" stroke-width="1"/><rect x="1" y="1" width="9" height="2.2" fill="#3aaef0"/><rect x="3.1" y="3.7" width="2.3" height="1.8" fill="#efb645"/><rect x="3.1" y="6.1" width="2.3" height="1.8" fill="#efb645"/><rect x="3.1" y="8.5" width="2.3" height="1.5" fill="#efb645"/><path d="M1 3.35H10" stroke="#9a9a9a" stroke-width="0.5"/><path d="M1 5.8H10M1 8.2H10" stroke="#bdbdbd" stroke-width="0.55"/><path d="M2.85 1V10M5.65 1V10M8.2 1V10" stroke="#a9a9a9" stroke-width="0.5"/></svg>
<div class="rtxt" style="top:35.26px;left:17.9px">city</div>
<div class="rtyp" style="top:35.26px;right:4.2px">String</div>
<svg width="11.6" height="11.4" viewBox="0 0 11 11" preserveAspectRatio="none" style="position:absolute;left:2.3px;top:56.41px"><rect x="0.5" y="0.5" width="10" height="10" fill="#fff" stroke="#8f8f8f" stroke-width="1"/><rect x="1" y="1" width="9" height="2.2" fill="#3aaef0"/><rect x="3.1" y="3.7" width="2.3" height="1.8" fill="#efb645"/><rect x="3.1" y="6.1" width="2.3" height="1.8" fill="#efb645"/><rect x="3.1" y="8.5" width="2.3" height="1.5" fill="#efb645"/><path d="M1 3.35H10" stroke="#9a9a9a" stroke-width="0.5"/><path d="M1 5.8H10M1 8.2H10" stroke="#bdbdbd" stroke-width="0.55"/><path d="M2.85 1V10M5.65 1V10M8.2 1V10" stroke="#a9a9a9" stroke-width="0.5"/></svg>
<div class="rtxt" style="top:53.11px;left:17.9px">zip</div>
<div class="rtyp" style="top:53.11px;right:4.2px">String</div>
<svg width="11.6" height="11.4" viewBox="0 0 11 11" preserveAspectRatio="none" style="position:absolute;left:2.3px;top:74.27px"><rect x="0.5" y="0.5" width="10" height="10" fill="#fff" stroke="#8f8f8f" stroke-width="1"/><rect x="1" y="1" width="9" height="2.2" fill="#3aaef0"/><rect x="3.1" y="3.7" width="2.3" height="1.8" fill="#efb645"/><rect x="3.1" y="6.1" width="2.3" height="1.8" fill="#efb645"/><rect x="3.1" y="8.5" width="2.3" height="1.5" fill="#efb645"/><path d="M1 3.35H10" stroke="#9a9a9a" stroke-width="0.5"/><path d="M1 5.8H10M1 8.2H10" stroke="#bdbdbd" stroke-width="0.55"/><path d="M2.85 1V10M5.65 1V10M8.2 1V10" stroke="#a9a9a9" stroke-width="0.5"/></svg>
<div class="rtxt" style="top:70.97px;left:17.9px">loc</div>
<div class="rtyp" style="top:70.97px;right:4.2px">Object</div>
<svg width="11.6" height="11.4" viewBox="0 0 11 11" preserveAspectRatio="none" style="position:absolute;left:2.3px;top:92.13px"><rect x="0.5" y="0.5" width="10" height="10" fill="#fff" stroke="#8f8f8f" stroke-width="1"/><rect x="1" y="1" width="9" height="2.2" fill="#3aaef0"/><rect x="3.1" y="3.7" width="2.3" height="1.8" fill="#efb645"/><rect x="3.1" y="6.1" width="2.3" height="1.8" fill="#efb645"/><rect x="3.1" y="8.5" width="2.3" height="1.5" fill="#efb645"/><path d="M1 3.35H10" stroke="#9a9a9a" stroke-width="0.5"/><path d="M1 5.8H10M1 8.2H10" stroke="#bdbdbd" stroke-width="0.55"/><path d="M2.85 1V10M5.65 1V10M8.2 1V10" stroke="#a9a9a9" stroke-width="0.5"/></svg>
<div class="rtxt" style="top:88.83px;left:17.9px">pop</div>
<div class="rtyp" style="top:88.83px;right:4.2px">Number</div>
<svg width="11.6" height="11.4" viewBox="0 0 11 11" preserveAspectRatio="none" style="position:absolute;left:2.3px;top:109.98px"><rect x="0.5" y="0.5" width="10" height="10" fill="#fff" stroke="#8f8f8f" stroke-width="1"/><rect x="1" y="1" width="9" height="2.2" fill="#3aaef0"/><rect x="3.1" y="3.7" width="2.3" height="1.8" fill="#efb645"/><rect x="3.1" y="6.1" width="2.3" height="1.8" fill="#efb645"/><rect x="3.1" y="8.5" width="2.3" height="1.5" fill="#efb645"/><path d="M1 3.35H10" stroke="#9a9a9a" stroke-width="0.5"/><path d="M1 5.8H10M1 8.2H10" stroke="#bdbdbd" stroke-width="0.55"/><path d="M2.85 1V10M5.65 1V10M8.2 1V10" stroke="#a9a9a9" stroke-width="0.5"/></svg>
<div class="rtxt" style="top:106.69px;left:17.9px">state</div>
<div class="rtyp" style="top:106.69px;right:4.2px">String</div>
<div class="idx" style="top:124.54px;height:18px"><span>Indexes (1)</span></div>
<div class="itri" style="left:95.0px;top:129.542px"></div>
<div class="strip" style="top:142.542px;background:#c2dd74"></div>
</div>
<div class="tbl" style="left:787.75px;top:202.75px;width:146.5px;height:113.12799999999999px;">
<div class="hdr" style="background:#84b8f5;height:16.5px"></div>
<svg width="11" height="11" viewBox="0 0 11 11" style="position:absolute;left:4.5px;top:3.2px"><rect x="0.5" y="0.5" width="10" height="10" fill="#fff" stroke="#8f8f8f" stroke-width="1"/><rect x="1" y="1" width="9" height="2.2" fill="#3aaef0"/><path d="M1 3.35H10" stroke="#9a9a9a" stroke-width="0.5"/><path d="M1 5.8H10M1 8.2H10" stroke="#c4c4c4" stroke-width="0.55"/><path d="M2.85 1V10M5.65 1V10M8.2 1V10" stroke="#b4b4b4" stroke-width="0.5"/></svg>
<div class="htxt" style="left:22.5px;top:0px;line-height:17.0px">grades</div>
<div class="tri" style="left:130.5px;top:5px;border-top-color:#4f6d90"></div>
<svg width="11.6" height="11.4" viewBox="0 0 11 11" preserveAspectRatio="none" style="position:absolute;left:2.3px;top:20.7px"><rect x="0.5" y="0.5" width="10" height="10" fill="#fff" stroke="#8f8f8f" stroke-width="1"/><rect x="1" y="1" width="9" height="2.2" fill="#3aaef0"/><rect x="3.1" y="3.7" width="2.3" height="1.8" fill="#efb645"/><rect x="3.1" y="6.1" width="2.3" height="1.8" fill="#efb645"/><rect x="3.1" y="8.5" width="2.3" height="1.5" fill="#efb645"/><path d="M1 3.35H10" stroke="#9a9a9a" stroke-width="0.5"/><path d="M1 5.8H10M1 8.2H10" stroke="#bdbdbd" stroke-width="0.55"/><path d="M2.85 1V10M5.65 1V10M8.2 1V10" stroke="#a9a9a9" stroke-width="0.5"/></svg>
<div class="rtxt" style="top:17.40px;left:17.9px">_id</div>
<div class="rtyp" style="top:17.40px;right:4.2px">Object</div>
<svg width="11.6" height="11.4" viewBox="0 0 11 11" preserveAspectRatio="none" style="position:absolute;left:2.3px;top:38.56px"><rect x="0.5" y="0.5" width="10" height="10" fill="#fff" stroke="#8f8f8f" stroke-width="1"/><rect x="1" y="1" width="9" height="2.2" fill="#3aaef0"/><rect x="3.1" y="3.7" width="2.3" height="1.8" fill="#efb645"/><rect x="3.1" y="6.1" width="2.3" height="1.8" fill="#efb645"/><rect x="3.1" y="8.5" width="2.3" height="1.5" fill="#efb645"/><path d="M1 3.35H10" stroke="#9a9a9a" stroke-width="0.5"/><path d="M1 5.8H10M1 8.2H10" stroke="#bdbdbd" stroke-width="0.55"/><path d="M2.85 1V10M5.65 1V10M8.2 1V10" stroke="#a9a9a9" stroke-width="0.5"/></svg>
<div class="rtxt" style="top:35.26px;left:17.9px">student_id</div>
<div class="rtyp" style="top:35.26px;right:4.2px">Number</div>
<svg width="11.6" height="11.4" viewBox="0 0 11 11" preserveAspectRatio="none" style="position:absolute;left:2.3px;top:56.41px"><rect x="0.5" y="0.5" width="10" height="10" fill="#fff" stroke="#8f8f8f" stroke-width="1"/><rect x="1" y="1" width="9" height="2.2" fill="#3aaef0"/><rect x="3.1" y="3.7" width="2.3" height="1.8" fill="#efb645"/><rect x="3.1" y="6.1" width="2.3" height="1.8" fill="#efb645"/><rect x="3.1" y="8.5" width="2.3" height="1.5" fill="#efb645"/><path d="M1 3.35H10" stroke="#9a9a9a" stroke-width="0.5"/><path d="M1 5.8H10M1 8.2H10" stroke="#bdbdbd" stroke-width="0.55"/><path d="M2.85 1V10M5.65 1V10M8.2 1V10" stroke="#a9a9a9" stroke-width="0.5"/></svg>
<div class="rtxt" style="top:53.11px;left:17.9px">scores</div>
<div class="rtyp" style="top:53.11px;right:4.2px">Array</div>
<svg width="11.6" height="11.4" viewBox="0 0 11 11" preserveAspectRatio="none" style="position:absolute;left:2.3px;top:74.27px"><rect x="0.5" y="0.5" width="10" height="10" fill="#fff" stroke="#8f8f8f" stroke-width="1"/><rect x="1" y="1" width="9" height="2.2" fill="#3aaef0"/><rect x="3.1" y="3.7" width="2.3" height="1.8" fill="#efb645"/><rect x="3.1" y="6.1" width="2.3" height="1.8" fill="#efb645"/><rect x="3.1" y="8.5" width="2.3" height="1.5" fill="#efb645"/><path d="M1 3.35H10" stroke="#9a9a9a" stroke-width="0.5"/><path d="M1 5.8H10M1 8.2H10" stroke="#bdbdbd" stroke-width="0.55"/><path d="M2.85 1V10M5.65 1V10M8.2 1V10" stroke="#a9a9a9" stroke-width="0.5"/></svg>
<div class="rtxt" style="top:70.97px;left:17.9px">class_id</div>
<div class="rtyp" style="top:70.97px;right:4.2px">Number</div>
<div class="idx" style="top:88.83px;height:18px"><span>Indexes (1)</span></div>
<div class="itri" style="left:132.0px;top:93.828px"></div>
<div class="strip" style="top:106.828px;background:#84b8f5"></div>
</div>
<div class="tbl" style="left:525.75px;top:327.85px;width:189.0px;height:472.9px;">
<div class="hdr" style="background:#f78b83;height:16.5px"></div>
<svg width="11" height="11" viewBox="0 0 11 11" style="position:absolute;left:4.5px;top:3.2px"><rect x="0.5" y="0.5" width="10" height="10" fill="#fff" stroke="#8f8f8f" stroke-width="1"/><rect x="1" y="1" width="9" height="2.2" fill="#3aaef0"/><path d="M1 3.35H10" stroke="#9a9a9a" stroke-width="0.5"/><path d="M1 5.8H10M1 8.2H10" stroke="#c4c4c4" stroke-width="0.55"/><path d="M2.85 1V10M5.65 1V10M8.2 1V10" stroke="#b4b4b4" stroke-width="0.5"/></svg>
<div class="htxt" style="left:22.5px;top:0px;line-height:17.0px">companies</div>
<div class="tri" style="left:173.0px;top:5px;border-top-color:#8f514c"></div>
<svg width="11.6" height="11.4" viewBox="0 0 11 11" preserveAspectRatio="none" style="position:absolute;left:2.3px;top:20.7px"><rect x="0.5" y="0.5" width="10" height="10" fill="#fff" stroke="#8f8f8f" stroke-width="1"/><rect x="1" y="1" width="9" height="2.2" fill="#3aaef0"/><rect x="3.1" y="3.7" width="2.3" height="1.8" fill="#efb645"/><rect x="3.1" y="6.1" width="2.3" height="1.8" fill="#efb645"/><rect x="3.1" y="8.5" width="2.3" height="1.5" fill="#efb645"/><path d="M1 3.35H10" stroke="#9a9a9a" stroke-width="0.5"/><path d="M1 5.8H10M1 8.2H10" stroke="#bdbdbd" stroke-width="0.55"/><path d="M2.85 1V10M5.65 1V10M8.2 1V10" stroke="#a9a9a9" stroke-width="0.5"/></svg>
<div class="rtxt" style="top:17.40px;left:17.9px">_id</div>
<div class="rtyp" style="top:17.40px;right:4.2px">Object</div>
<svg width="11.6" height="11.4" viewBox="0 0 11 11" preserveAspectRatio="none" style="position:absolute;left:2.3px;top:38.56px"><rect x="0.5" y="0.5" width="10" height="10" fill="#fff" stroke="#8f8f8f" stroke-width="1"/><rect x="1" y="1" width="9" height="2.2" fill="#3aaef0"/><rect x="3.1" y="3.7" width="2.3" height="1.8" fill="#efb645"/><rect x="3.1" y="6.1" width="2.3" height="1.8" fill="#efb645"/><rect x="3.1" y="8.5" width="2.3" height="1.5" fill="#efb645"/><path d="M1 3.35H10" stroke="#9a9a9a" stroke-width="0.5"/><path d="M1 5.8H10M1 8.2H10" stroke="#bdbdbd" stroke-width="0.55"/><path d="M2.85 1V10M5.65 1V10M8.2 1V10" stroke="#a9a9a9" stroke-width="0.5"/></svg>
<div class="rtxt" style="top:35.26px;left:17.9px">name</div>
<div class="rtyp" style="top:35.26px;right:4.2px">String</div>
<svg width="11.6" height="11.4" viewBox="0 0 11 11" preserveAspectRatio="none" style="position:absolute;left:2.3px;top:56.41px"><rect x="0.5" y="0.5" width="10" height="10" fill="#fff" stroke="#8f8f8f" stroke-width="1"/><rect x="1" y="1" width="9" height="2.2" fill="#3aaef0"/><rect x="3.1" y="3.7" width="2.3" height="1.8" fill="#efb645"/><rect x="3.1" y="6.1" width="2.3" height="1.8" fill="#efb645"/><rect x="3.1" y="8.5" width="2.3" height="1.5" fill="#efb645"/><path d="M1 3.35H10" stroke="#9a9a9a" stroke-width="0.5"/><path d="M1 5.8H10M1 8.2H10" stroke="#bdbdbd" stroke-width="0.55"/><path d="M2.85 1V10M5.65 1V10M8.2 1V10" stroke="#a9a9a9" stroke-width="0.5"/></svg>
<div class="rtxt" style="top:53.11px;left:17.9px">permalink</div>
<div class="rtyp" style="top:53.11px;right:4.2px">String</div>
<svg width="11.6" height="11.4" viewBox="0 0 11 11" preserveAspectRatio="none" style="position:absolute;left:2.3px;top:74.27px"><rect x="0.5" y="0.5" width="10" height="10" fill="#fff" stroke="#8f8f8f" stroke-width="1"/><rect x="1" y="1" width="9" height="2.2" fill="#3aaef0"/><rect x="3.1" y="3.7" width="2.3" height="1.8" fill="#efb645"/><rect x="3.1" y="6.1" width="2.3" height="1.8" fill="#efb645"/><rect x="3.1" y="8.5" width="2.3" height="1.5" fill="#efb645"/><path d="M1 3.35H10" stroke="#9a9a9a" stroke-width="0.5"/><path d="M1 5.8H10M1 8.2H10" stroke="#bdbdbd" stroke-width="0.55"/><path d="M2.85 1V10M5.65 1V10M8.2 1V10" stroke="#a9a9a9" stroke-width="0.5"/></svg>
<div class="rtxt" style="top:70.97px;left:17.9px">crunchbase_url</div>
<div class="rtyp" style="top:70.97px;right:4.2px">String</div>
<svg width="11.6" height="11.4" viewBox="0 0 11 11" preserveAspectRatio="none" style="position:absolute;left:2.3px;top:92.13px"><rect x="0.5" y="0.5" width="10" height="10" fill="#fff" stroke="#8f8f8f" stroke-width="1"/><rect x="1" y="1" width="9" height="2.2" fill="#3aaef0"/><rect x="3.1" y="3.7" width="2.3" height="1.8" fill="#efb645"/><rect x="3.1" y="6.1" width="2.3" height="1.8" fill="#efb645"/><rect x="3.1" y="8.5" width="2.3" height="1.5" fill="#efb645"/><path d="M1 3.35H10" stroke="#9a9a9a" stroke-width="0.5"/><path d="M1 5.8H10M1 8.2H10" stroke="#bdbdbd" stroke-width="0.55"/><path d="M2.85 1V10M5.65 1V10M8.2 1V10" stroke="#a9a9a9" stroke-width="0.5"/></svg>
<div class="rtxt" style="top:88.83px;left:17.9px">homepage_url</div>
<div class="rtyp" style="top:88.83px;right:4.2px">String</div>
<svg width="11.6" height="11.4" viewBox="0 0 11 11" preserveAspectRatio="none" style="position:absolute;left:2.3px;top:109.98px"><rect x="0.5" y="0.5" width="10" height="10" fill="#fff" stroke="#8f8f8f" stroke-width="1"/><rect x="1" y="1" width="9" height="2.2" fill="#3aaef0"/><rect x="3.1" y="3.7" width="2.3" height="1.8" fill="#efb645"/><rect x="3.1" y="6.1" width="2.3" height="1.8" fill="#efb645"/><rect x="3.1" y="8.5" width="2.3" height="1.5" fill="#efb645"/><path d="M1 3.35H10" stroke="#9a9a9a" stroke-width="0.5"/><path d="M1 5.8H10M1 8.2H10" stroke="#bdbdbd" stroke-width="0.55"/><path d="M2.85 1V10M5.65 1V10M8.2 1V10" stroke="#a9a9a9" stroke-width="0.5"/></svg>
<div class="rtxt" style="top:106.69px;left:17.9px">blog_url</div>
<div class="rtyp" style="top:106.69px;right:4.2px">String</div>
<svg width="11.6" height="11.4" viewBox="0 0 11 11" preserveAspectRatio="none" style="position:absolute;left:2.3px;top:127.84px"><rect x="0.5" y="0.5" width="10" height="10" fill="#fff" stroke="#8f8f8f" stroke-width="1"/><rect x="1" y="1" width="9" height="2.2" fill="#3aaef0"/><rect x="3.1" y="3.7" width="2.3" height="1.8" fill="#efb645"/><rect x="3.1" y="6.1" width="2.3" height="1.8" fill="#efb645"/><rect x="3.1" y="8.5" width="2.3" height="1.5" fill="#efb645"/><path d="M1 3.35H10" stroke="#9a9a9a" stroke-width="0.5"/><path d="M1 5.8H10M1 8.2H10" stroke="#bdbdbd" stroke-width="0.55"/><path d="M2.85 1V10M5.65 1V10M8.2 1V10" stroke="#a9a9a9" stroke-width="0.5"/></svg>
<div class="rtxt" style="top:124.54px;left:17.9px">blog_feed_url</div>
<div class="rtyp" style="top:124.54px;right:4.2px">String</div>
<svg width="11.6" height="11.4" viewBox="0 0 11 11" preserveAspectRatio="none" style="position:absolute;left:2.3px;top:145.7px"><rect x="0.5" y="0.5" width="10" height="10" fill="#fff" stroke="#8f8f8f" stroke-width="1"/><rect x="1" y="1" width="9" height="2.2" fill="#3aaef0"/><rect x="3.1" y="3.7" width="2.3" height="1.8" fill="#efb645"/><rect x="3.1" y="6.1" width="2.3" height="1.8" fill="#efb645"/><rect x="3.1" y="8.5" width="2.3" height="1.5" fill="#efb645"/><path d="M1 3.35H10" stroke="#9a9a9a" stroke-width="0.5"/><path d="M1 5.8H10M1 8.2H10" stroke="#bdbdbd" stroke-width="0.55"/><path d="M2.85 1V10M5.65 1V10M8.2 1V10" stroke="#a9a9a9" stroke-width="0.5"/></svg>
<div class="rtxt" style="top:142.40px;left:17.9px">twitter_username</div>
<div class="rtyp" style="top:142.40px;right:4.2px">String</div>
<svg width="11.6" height="11.4" viewBox="0 0 11 11" preserveAspectRatio="none" style="position:absolute;left:2.3px;top:163.56px"><rect x="0.5" y="0.5" width="10" height="10" fill="#fff" stroke="#8f8f8f" stroke-width="1"/><rect x="1" y="1" width="9" height="2.2" fill="#3aaef0"/><rect x="3.1" y="3.7" width="2.3" height="1.8" fill="#efb645"/><rect x="3.1" y="6.1" width="2.3" height="1.8" fill="#efb645"/><rect x="3.1" y="8.5" width="2.3" height="1.5" fill="#efb645"/><path d="M1 3.35H10" stroke="#9a9a9a" stroke-width="0.5"/><path d="M1 5.8H10M1 8.2H10" stroke="#bdbdbd" stroke-width="0.55"/><path d="M2.85 1V10M5.65 1V10M8.2 1V10" stroke="#a9a9a9" stroke-width="0.5"/></svg>
<div class="rtxt" style="top:160.26px;left:17.9px">category_code</div>
<div class="rtyp" style="top:160.26px;right:4.2px">String</div>
<svg width="11.6" height="11.4" viewBox="0 0 11 11" preserveAspectRatio="none" style="position:absolute;left:2.3px;top:181.41px"><rect x="0.5" y="0.5" width="10" height="10" fill="#fff" stroke="#8f8f8f" stroke-width="1"/><rect x="1" y="1" width="9" height="2.2" fill="#3aaef0"/><rect x="3.1" y="3.7" width="2.3" height="1.8" fill="#efb645"/><rect x="3.1" y="6.1" width="2.3" height="1.8" fill="#efb645"/><rect x="3.1" y="8.5" width="2.3" height="1.5" fill="#efb645"/><path d="M1 3.35H10" stroke="#9a9a9a" stroke-width="0.5"/><path d="M1 5.8H10M1 8.2H10" stroke="#bdbdbd" stroke-width="0.55"/><path d="M2.85 1V10M5.65 1V10M8.2 1V10" stroke="#a9a9a9" stroke-width="0.5"/></svg>
<div class="rtxt" style="top:178.11px;left:17.9px">number_of_employees</div>
<div class="rtyp" style="top:178.11px;right:4.2px">Nu...er</div>
<svg width="11.6" height="11.4" viewBox="0 0 11 11" preserveAspectRatio="none" style="position:absolute;left:2.3px;top:199.27px"><rect x="0.5" y="0.5" width="10" height="10" fill="#fff" stroke="#8f8f8f" stroke-width="1"/><rect x="1" y="1" width="9" height="2.2" fill="#3aaef0"/><rect x="3.1" y="3.7" width="2.3" height="1.8" fill="#efb645"/><rect x="3.1" y="6.1" width="2.3" height="1.8" fill="#efb645"/><rect x="3.1" y="8.5" width="2.3" height="1.5" fill="#efb645"/><path d="M1 3.35H10" stroke="#9a9a9a" stroke-width="0.5"/><path d="M1 5.8H10M1 8.2H10" stroke="#bdbdbd" stroke-width="0.55"/><path d="M2.85 1V10M5.65 1V10M8.2 1V10" stroke="#a9a9a9" stroke-width="0.5"/></svg>
<div class="rtxt" style="top:195.97px;left:17.9px">founded_year</div>
<div class="rtyp" style="top:195.97px;right:4.2px">Number</div>
<svg width="11.6" height="11.4" viewBox="0 0 11 11" preserveAspectRatio="none" style="position:absolute;left:2.3px;top:217.13px"><rect x="0.5" y="0.5" width="10" height="10" fill="#fff" stroke="#8f8f8f" stroke-width="1"/><rect x="1" y="1" width="9" height="2.2" fill="#3aaef0"/><rect x="3.1" y="3.7" width="2.3" height="1.8" fill="#efb645"/><rect x="3.1" y="6.1" width="2.3" height="1.8" fill="#efb645"/><rect x="3.1" y="8.5" width="2.3" height="1.5" fill="#efb645"/><path d="M1 3.35H10" stroke="#9a9a9a" stroke-width="0.5"/><path d="M1 5.8H10M1 8.2H10" stroke="#bdbdbd" stroke-width="0.55"/><path d="M2.85 1V10M5.65 1V10M8.2 1V10" stroke="#a9a9a9" stroke-width="0.5"/></svg>
<div class="rtxt" style="top:213.83px;left:17.9px">founded_month</div>
<div class="rtyp" style="top:213.83px;right:4.2px">Number</div>
<svg width="11.6" height="11.4" viewBox="0 0 11 11" preserveAspectRatio="none" style="position:absolute;left:2.3px;top:234.98px"><rect x="0.5" y="0.5" width="10" height="10" fill="#fff" stroke="#8f8f8f" stroke-width="1"/><rect x="1" y="1" width="9" height="2.2" fill="#3aaef0"/><rect x="3.1" y="3.7" width="2.3" height="1.8" fill="#efb645"/><rect x="3.1" y="6.1" width="2.3" height="1.8" fill="#efb645"/><rect x="3.1" y="8.5" width="2.3" height="1.5" fill="#efb645"/><path d="M1 3.35H10" stroke="#9a9a9a" stroke-width="0.5"/><path d="M1 5.8H10M1 8.2H10" stroke="#bdbdbd" stroke-width="0.55"/><path d="M2.85 1V10M5.65 1V10M8.2 1V10" stroke="#a9a9a9" stroke-width="0.5"/></svg>
<div class="rtxt" style="top:231.68px;left:17.9px">founded_day</div>
<div class="rtyp" style="top:231.68px;right:4.2px">Number</div>
<svg width="11.6" height="11.4" viewBox="0 0 11 11" preserveAspectRatio="none" style="position:absolute;left:2.3px;top:252.84px"><rect x="0.5" y="0.5" width="10" height="10" fill="#fff" stroke="#8f8f8f" stroke-width="1"/><rect x="1" y="1" width="9" height="2.2" fill="#3aaef0"/><rect x="3.1" y="3.7" width="2.3" height="1.8" fill="#efb645"/><rect x="3.1" y="6.1" width="2.3" height="1.8" fill="#efb645"/><rect x="3.1" y="8.5" width="2.3" height="1.5" fill="#efb645"/><path d="M1 3.35H10" stroke="#9a9a9a" stroke-width="0.5"/><path d="M1 5.8H10M1 8.2H10" stroke="#bdbdbd" stroke-width="0.55"/><path d="M2.85 1V10M5.65 1V10M8.2 1V10" stroke="#a9a9a9" stroke-width="0.5"/></svg>
<div class="rtxt" style="top:249.54px;left:17.9px">deadpooled_year</div>
<div class="rtyp" style="top:249.54px;right:4.2px">Null</div>
<svg width="11.6" height="11.4" viewBox="0 0 11 11" preserveAspectRatio="none" style="position:absolute;left:2.3px;top:270.7px"><rect x="0.5" y="0.5" width="10" height="10" fill="#fff" stroke="#8f8f8f" stroke-width="1"/><rect x="1" y="1" width="9" height="2.2" fill="#3aaef0"/><rect x="3.1" y="3.7" width="2.3" height="1.8" fill="#efb645"/><rect x="3.1" y="6.1" width="2.3" height="1.8" fill="#efb645"/><rect x="3.1" y="8.5" width="2.3" height="1.5" fill="#efb645"/><path d="M1 3.35H10" stroke="#9a9a9a" stroke-width="0.5"/><path d="M1 5.8H10M1 8.2H10" stroke="#bdbdbd" stroke-width="0.55"/><path d="M2.85 1V10M5.65 1V10M8.2 1V10" stroke="#a9a9a9" stroke-width="0.5"/></svg>
<div class="rtxt" style="top:267.40px;left:17.9px">deadpooled_month</div>
<div class="rtyp" style="top:267.40px;right:4.2px">Null</div>
<svg width="11.6" height="11.4" viewBox="0 0 11 11" preserveAspectRatio="none" style="position:absolute;left:2.3px;top:288.56px"><rect x="0.5" y="0.5" width="10" height="10" fill="#fff" stroke="#8f8f8f" stroke-width="1"/><rect x="1" y="1" width="9" height="2.2" fill="#3aaef0"/><rect x="3.1" y="3.7" width="2.3" height="1.8" fill="#efb645"/><rect x="3.1" y="6.1" width="2.3" height="1.8" fill="#efb645"/><rect x="3.1" y="8.5" width="2.3" height="1.5" fill="#efb645"/><path d="M1 3.35H10" stroke="#9a9a9a" stroke-width="0.5"/><path d="M1 5.8H10M1 8.2H10" stroke="#bdbdbd" stroke-width="0.55"/><path d="M2.85 1V10M5.65 1V10M8.2 1V10" stroke="#a9a9a9" stroke-width="0.5"/></svg>
<div class="rtxt" style="top:285.25px;left:17.9px">deadpooled_day</div>
<div class="rtyp" style="top:285.25px;right:4.2px">Null</div>
<svg width="11.6" height="11.4" viewBox="0 0 11 11" preserveAspectRatio="none" style="position:absolute;left:2.3px;top:306.41px"><rect x="0.5" y="0.5" width="10" height="10" fill="#fff" stroke="#8f8f8f" stroke-width="1"/><rect x="1" y="1" width="9" height="2.2" fill="#3aaef0"/><rect x="3.1" y="3.7" width="2.3" height="1.8" fill="#efb645"/><rect x="3.1" y="6.1" width="2.3" height="1.8" fill="#efb645"/><rect x="3.1" y="8.5" width="2.3" height="1.5" fill="#efb645"/><path d="M1 3.35H10" stroke="#9a9a9a" stroke-width="0.5"/><path d="M1 5.8H10M1 8.2H10" stroke="#bdbdbd" stroke-width="0.55"/><path d="M2.85 1V10M5.65 1V10M8.2 1V10" stroke="#a9a9a9" stroke-width="0.5"/></svg>
<div class="rtxt" style="top:303.11px;left:17.9px">deadpooled_url</div>
<div class="rtyp" style="top:303.11px;right:4.2px">String</div>
<svg width="11.6" height="11.4" viewBox="0 0 11 11" preserveAspectRatio="none" style="position:absolute;left:2.3px;top:324.27px"><rect x="0.5" y="0.5" width="10" height="10" fill="#fff" stroke="#8f8f8f" stroke-width="1"/><rect x="1" y="1" width="9" height="2.2" fill="#3aaef0"/><rect x="3.1" y="3.7" width="2.3" height="1.8" fill="#efb645"/><rect x="3.1" y="6.1" width="2.3" height="1.8" fill="#efb645"/><rect x="3.1" y="8.5" width="2.3" height="1.5" fill="#efb645"/><path d="M1 3.35H10" stroke="#9a9a9a" stroke-width="0.5"/><path d="M1 5.8H10M1 8.2H10" stroke="#bdbdbd" stroke-width="0.55"/><path d="M2.85 1V10M5.65 1V10M8.2 1V10" stroke="#a9a9a9" stroke-width="0.5"/></svg>
<div class="rtxt" style="top:320.97px;left:17.9px">tag_list</div>
<div class="rtyp" style="top:320.97px;right:4.2px">String</div>
<svg width="11.6" height="11.4" viewBox="0 0 11 11" preserveAspectRatio="none" style="position:absolute;left:2.3px;top:342.13px"><rect x="0.5" y="0.5" width="10" height="10" fill="#fff" stroke="#8f8f8f" stroke-width="1"/><rect x="1" y="1" width="9" height="2.2" fill="#3aaef0"/><rect x="3.1" y="3.7" width="2.3" height="1.8" fill="#efb645"/><rect x="3.1" y="6.1" width="2.3" height="1.8" fill="#efb645"/><rect x="3.1" y="8.5" width="2.3" height="1.5" fill="#efb645"/><path d="M1 3.35H10" stroke="#9a9a9a" stroke-width="0.5"/><path d="M1 5.8H10M1 8.2H10" stroke="#bdbdbd" stroke-width="0.55"/><path d="M2.85 1V10M5.65 1V10M8.2 1V10" stroke="#a9a9a9" stroke-width="0.5"/></svg>
<div class="rtxt" style="top:338.83px;left:17.9px">alias_list</div>
<div class="rtyp" style="top:338.83px;right:4.2px">String</div>
<svg width="11.6" height="11.4" viewBox="0 0 11 11" preserveAspectRatio="none" style="position:absolute;left:2.3px;top:359.98px"><rect x="0.5" y="0.5" width="10" height="10" fill="#fff" stroke="#8f8f8f" stroke-width="1"/><rect x="1" y="1" width="9" height="2.2" fill="#3aaef0"/><rect x="3.1" y="3.7" width="2.3" height="1.8" fill="#efb645"/><rect x="3.1" y="6.1" width="2.3" height="1.8" fill="#efb645"/><rect x="3.1" y="8.5" width="2.3" height="1.5" fill="#efb645"/><path d="M1 3.35H10" stroke="#9a9a9a" stroke-width="0.5"/><path d="M1 5.8H10M1 8.2H10" stroke="#bdbdbd" stroke-width="0.55"/><path d="M2.85 1V10M5.65 1V10M8.2 1V10" stroke="#a9a9a9" stroke-width="0.5"/></svg>
<div class="rtxt" style="top:356.68px;left:17.9px">email_address</div>
<div class="rtyp" style="top:356.68px;right:4.2px">String</div>
<svg width="11.6" height="11.4" viewBox="0 0 11 11" preserveAspectRatio="none" style="position:absolute;left:2.3px;top:377.84px"><rect x="0.5" y="0.5" width="10" height="10" fill="#fff" stroke="#8f8f8f" stroke-width="1"/><rect x="1" y="1" width="9" height="2.2" fill="#3aaef0"/><rect x="3.1" y="3.7" width="2.3" height="1.8" fill="#efb645"/><rect x="3.1" y="6.1" width="2.3" height="1.8" fill="#efb645"/><rect x="3.1" y="8.5" width="2.3" height="1.5" fill="#efb645"/><path d="M1 3.35H10" stroke="#9a9a9a" stroke-width="0.5"/><path d="M1 5.8H10M1 8.2H10" stroke="#bdbdbd" stroke-width="0.55"/><path d="M2.85 1V10M5.65 1V10M8.2 1V10" stroke="#a9a9a9" stroke-width="0.5"/></svg>
<div class="rtxt" style="top:374.54px;left:17.9px">phone_number</div>
<div class="rtyp" style="top:374.54px;right:4.2px">String</div>
<svg width="11.6" height="11.4" viewBox="0 0 11 11" preserveAspectRatio="none" style="position:absolute;left:2.3px;top:395.7px"><rect x="0.5" y="0.5" width="10" height="10" fill="#fff" stroke="#8f8f8f" stroke-width="1"/><rect x="1" y="1" width="9" height="2.2" fill="#3aaef0"/><rect x="3.1" y="3.7" width="2.3" height="1.8" fill="#efb645"/><rect x="3.1" y="6.1" width="2.3" height="1.8" fill="#efb645"/><rect x="3.1" y="8.5" width="2.3" height="1.5" fill="#efb645"/><path d="M1 3.35H10" stroke="#9a9a9a" stroke-width="0.5"/><path d="M1 5.8H10M1 8.2H10" stroke="#bdbdbd" stroke-width="0.55"/><path d="M2.85 1V10M5.65 1V10M8.2 1V10" stroke="#a9a9a9" stroke-width="0.5"/></svg>
<div class="rtxt" style="top:392.40px;left:17.9px">description</div>
<div class="rtyp" style="top:392.40px;right:4.2px">String</div>
<svg width="11.6" height="11.4" viewBox="0 0 11 11" preserveAspectRatio="none" style="position:absolute;left:2.3px;top:413.55px"><rect x="0.5" y="0.5" width="10" height="10" fill="#fff" stroke="#8f8f8f" stroke-width="1"/><rect x="1" y="1" width="9" height="2.2" fill="#3aaef0"/><rect x="3.1" y="3.7" width="2.3" height="1.8" fill="#efb645"/><rect x="3.1" y="6.1" width="2.3" height="1.8" fill="#efb645"/><rect x="3.1" y="8.5" width="2.3" height="1.5" fill="#efb645"/><path d="M1 3.35H10" stroke="#9a9a9a" stroke-width="0.5"/><path d="M1 5.8H10M1 8.2H10" stroke="#bdbdbd" stroke-width="0.55"/><path d="M2.85 1V10M5.65 1V10M8.2 1V10" stroke="#a9a9a9" stroke-width="0.5"/></svg>
<div class="rtxt" style="top:410.25px;left:17.9px">created_at</div>
<div class="rtyp" style="top:410.25px;right:4.2px">String</div>
<svg width="11.6" height="11.4" viewBox="0 0 11 11" preserveAspectRatio="none" style="position:absolute;left:2.3px;top:431.41px"><rect x="0.5" y="0.5" width="10" height="10" fill="#fff" stroke="#8f8f8f" stroke-width="1"/><rect x="1" y="1" width="9" height="2.2" fill="#3aaef0"/><rect x="3.1" y="3.7" width="2.3" height="1.8" fill="#efb645"/><rect x="3.1" y="6.1" width="2.3" height="1.8" fill="#efb645"/><rect x="3.1" y="8.5" width="2.3" height="1.5" fill="#efb645"/><path d="M1 3.35H10" stroke="#9a9a9a" stroke-width="0.5"/><path d="M1 5.8H10M1 8.2H10" stroke="#bdbdbd" stroke-width="0.55"/><path d="M2.85 1V10M5.65 1V10M8.2 1V10" stroke="#a9a9a9" stroke-width="0.5"/></svg>
<div class="rtxt" style="top:428.11px;left:17.9px">updated_at</div>
<div class="rtyp" style="top:428.11px;right:4.2px">String</div>
<svg width="11.6" height="11.4" viewBox="0 0 11 11" preserveAspectRatio="none" style="position:absolute;left:2.3px;top:449.27px"><rect x="0.5" y="0.5" width="10" height="10" fill="#fff" stroke="#8f8f8f" stroke-width="1"/><rect x="1" y="1" width="9" height="2.2" fill="#3aaef0"/><rect x="3.1" y="3.7" width="2.3" height="1.8" fill="#efb645"/><rect x="3.1" y="6.1" width="2.3" height="1.8" fill="#efb645"/><rect x="3.1" y="8.5" width="2.3" height="1.5" fill="#efb645"/><path d="M1 3.35H10" stroke="#9a9a9a" stroke-width="0.5"/><path d="M1 5.8H10M1 8.2H10" stroke="#bdbdbd" stroke-width="0.55"/><path d="M2.85 1V10M5.65 1V10M8.2 1V10" stroke="#a9a9a9" stroke-width="0.5"/></svg>
<div class="rtxt" style="top:445.97px;left:17.9px">overview</div>
<div class="rtyp" style="top:445.97px;right:4.2px">String</div>
<svg width="11.6" height="11.4" viewBox="0 0 11 11" preserveAspectRatio="none" style="position:absolute;left:2.3px;top:467.12px"><rect x="0.5" y="0.5" width="10" height="10" fill="#fff" stroke="#8f8f8f" stroke-width="1"/><rect x="1" y="1" width="9" height="2.2" fill="#3aaef0"/><rect x="3.1" y="3.7" width="2.3" height="1.8" fill="#efb645"/><rect x="3.1" y="6.1" width="2.3" height="1.8" fill="#efb645"/><rect x="3.1" y="8.5" width="2.3" height="1.5" fill="#efb645"/><path d="M1 3.35H10" stroke="#9a9a9a" stroke-width="0.5"/><path d="M1 5.8H10M1 8.2H10" stroke="#bdbdbd" stroke-width="0.55"/><path d="M2.85 1V10M5.65 1V10M8.2 1V10" stroke="#a9a9a9" stroke-width="0.5"/></svg>
<div class="rtxt" style="top:463.82px;left:17.9px">image</div>
<div class="rtyp" style="top:463.82px;right:4.2px">Object</div>
</div>
<div class="tbl" style="left:743.75px;top:327.85px;width:109.0px;height:184.55599999999998px;">
<div class="hdr" style="background:#f6b86c;height:16.5px"></div>
<svg width="11" height="11" viewBox="0 0 11 11" style="position:absolute;left:4.5px;top:3.2px"><rect x="0.5" y="0.5" width="10" height="10" fill="#fff" stroke="#8f8f8f" stroke-width="1"/><rect x="1" y="1" width="9" height="2.2" fill="#3aaef0"/><path d="M1 3.35H10" stroke="#9a9a9a" stroke-width="0.5"/><path d="M1 5.8H10M1 8.2H10" stroke="#c4c4c4" stroke-width="0.55"/><path d="M2.85 1V10M5.65 1V10M8.2 1V10" stroke="#b4b4b4" stroke-width="0.5"/></svg>
<div class="htxt" style="left:22.5px;top:0px;line-height:17.0px">posts</div>
<div class="tri" style="left:93.0px;top:5px;border-top-color:#8d6a3f"></div>
<svg width="11.6" height="11.4" viewBox="0 0 11 11" preserveAspectRatio="none" style="position:absolute;left:2.3px;top:20.7px"><rect x="0.5" y="0.5" width="10" height="10" fill="#fff" stroke="#8f8f8f" stroke-width="1"/><rect x="1" y="1" width="9" height="2.2" fill="#3aaef0"/><rect x="3.1" y="3.7" width="2.3" height="1.8" fill="#efb645"/><rect x="3.1" y="6.1" width="2.3" height="1.8" fill="#efb645"/><rect x="3.1" y="8.5" width="2.3" height="1.5" fill="#efb645"/><path d="M1 3.35H10" stroke="#9a9a9a" stroke-width="0.5"/><path d="M1 5.8H10M1 8.2H10" stroke="#bdbdbd" stroke-width="0.55"/><path d="M2.85 1V10M5.65 1V10M8.2 1V10" stroke="#a9a9a9" stroke-width="0.5"/></svg>
<div class="rtxt" style="top:17.40px;left:17.9px">_id</div>
<div class="rtyp" style="top:17.40px;right:4.2px">Object</div>
<svg width="11.6" height="11.4" viewBox="0 0 11 11" preserveAspectRatio="none" style="position:absolute;left:2.3px;top:38.56px"><rect x="0.5" y="0.5" width="10" height="10" fill="#fff" stroke="#8f8f8f" stroke-width="1"/><rect x="1" y="1" width="9" height="2.2" fill="#3aaef0"/><rect x="3.1" y="3.7" width="2.3" height="1.8" fill="#efb645"/><rect x="3.1" y="6.1" width="2.3" height="1.8" fill="#efb645"/><rect x="3.1" y="8.5" width="2.3" height="1.5" fill="#efb645"/><path d="M1 3.35H10" stroke="#9a9a9a" stroke-width="0.5"/><path d="M1 5.8H10M1 8.2H10" stroke="#bdbdbd" stroke-width="0.55"/><path d="M2.85 1V10M5.65 1V10M8.2 1V10" stroke="#a9a9a9" stroke-width="0.5"/></svg>
<div class="rtxt" style="top:35.26px;left:17.9px">body</div>
<div class="rtyp" style="top:35.26px;right:4.2px">String</div>
<svg width="11.6" height="11.4" viewBox="0 0 11 11" preserveAspectRatio="none" style="position:absolute;left:2.3px;top:56.41px"><rect x="0.5" y="0.5" width="10" height="10" fill="#fff" stroke="#8f8f8f" stroke-width="1"/><rect x="1" y="1" width="9" height="2.2" fill="#3aaef0"/><rect x="3.1" y="3.7" width="2.3" height="1.8" fill="#efb645"/><rect x="3.1" y="6.1" width="2.3" height="1.8" fill="#efb645"/><rect x="3.1" y="8.5" width="2.3" height="1.5" fill="#efb645"/><path d="M1 3.35H10" stroke="#9a9a9a" stroke-width="0.5"/><path d="M1 5.8H10M1 8.2H10" stroke="#bdbdbd" stroke-width="0.55"/><path d="M2.85 1V10M5.65 1V10M8.2 1V10" stroke="#a9a9a9" stroke-width="0.5"/></svg>
<div class="rtxt" style="top:53.11px;left:17.9px">permalink</div>
<div class="rtyp" style="top:53.11px;right:4.2px">String</div>
<svg width="11.6" height="11.4" viewBox="0 0 11 11" preserveAspectRatio="none" style="position:absolute;left:2.3px;top:74.27px"><rect x="0.5" y="0.5" width="10" height="10" fill="#fff" stroke="#8f8f8f" stroke-width="1"/><rect x="1" y="1" width="9" height="2.2" fill="#3aaef0"/><rect x="3.1" y="3.7" width="2.3" height="1.8" fill="#efb645"/><rect x="3.1" y="6.1" width="2.3" height="1.8" fill="#efb645"/><rect x="3.1" y="8.5" width="2.3" height="1.5" fill="#efb645"/><path d="M1 3.35H10" stroke="#9a9a9a" stroke-width="0.5"/><path d="M1 5.8H10M1 8.2H10" stroke="#bdbdbd" stroke-width="0.55"/><path d="M2.85 1V10M5.65 1V10M8.2 1V10" stroke="#a9a9a9" stroke-width="0.5"/></svg>
<div class="rtxt" style="top:70.97px;left:17.9px">author</div>
<div class="rtyp" style="top:70.97px;right:4.2px">String</div>
<svg width="11.6" height="11.4" viewBox="0 0 11 11" preserveAspectRatio="none" style="position:absolute;left:2.3px;top:92.13px"><rect x="0.5" y="0.5" width="10" height="10" fill="#fff" stroke="#8f8f8f" stroke-width="1"/><rect x="1" y="1" width="9" height="2.2" fill="#3aaef0"/><rect x="3.1" y="3.7" width="2.3" height="1.8" fill="#efb645"/><rect x="3.1" y="6.1" width="2.3" height="1.8" fill="#efb645"/><rect x="3.1" y="8.5" width="2.3" height="1.5" fill="#efb645"/><path d="M1 3.35H10" stroke="#9a9a9a" stroke-width="0.5"/><path d="M1 5.8H10M1 8.2H10" stroke="#bdbdbd" stroke-width="0.55"/><path d="M2.85 1V10M5.65 1V10M8.2 1V10" stroke="#a9a9a9" stroke-width="0.5"/></svg>
<div class="rtxt" style="top:88.83px;left:17.9px">title</div>
<div class="rtyp" style="top:88.83px;right:4.2px">String</div>
<svg width="11.6" height="11.4" viewBox="0 0 11 11" preserveAspectRatio="none" style="position:absolute;left:2.3px;top:109.98px"><rect x="0.5" y="0.5" width="10" height="10" fill="#fff" stroke="#8f8f8f" stroke-width="1"/><rect x="1" y="1" width="9" height="2.2" fill="#3aaef0"/><rect x="3.1" y="3.7" width="2.3" height="1.8" fill="#efb645"/><rect x="3.1" y="6.1" width="2.3" height="1.8" fill="#efb645"/><rect x="3.1" y="8.5" width="2.3" height="1.5" fill="#efb645"/><path d="M1 3.35H10" stroke="#9a9a9a" stroke-width="0.5"/><path d="M1 5.8H10M1 8.2H10" stroke="#bdbdbd" stroke-width="0.55"/><path d="M2.85 1V10M5.65 1V10M8.2 1V10" stroke="#a9a9a9" stroke-width="0.5"/></svg>
<div class="rtxt" style="top:106.69px;left:17.9px">tags</div>
<div class="rtyp" style="top:106.69px;right:4.2px">Array</div>
<svg width="11.6" height="11.4" viewBox="0 0 11 11" preserveAspectRatio="none" style="position:absolute;left:2.3px;top:127.84px"><rect x="0.5" y="0.5" width="10" height="10" fill="#fff" stroke="#8f8f8f" stroke-width="1"/><rect x="1" y="1" width="9" height="2.2" fill="#3aaef0"/><rect x="3.1" y="3.7" width="2.3" height="1.8" fill="#efb645"/><rect x="3.1" y="6.1" width="2.3" height="1.8" fill="#efb645"/><rect x="3.1" y="8.5" width="2.3" height="1.5" fill="#efb645"/><path d="M1 3.35H10" stroke="#9a9a9a" stroke-width="0.5"/><path d="M1 5.8H10M1 8.2H10" stroke="#bdbdbd" stroke-width="0.55"/><path d="M2.85 1V10M5.65 1V10M8.2 1V10" stroke="#a9a9a9" stroke-width="0.5"/></svg>
<div class="rtxt" style="top:124.54px;left:17.9px">comments</div>
<div class="rtyp" style="top:124.54px;right:4.2px">Array</div>
<svg width="11.6" height="11.4" viewBox="0 0 11 11" preserveAspectRatio="none" style="position:absolute;left:2.3px;top:145.7px"><rect x="0.5" y="0.5" width="10" height="10" fill="#fff" stroke="#8f8f8f" stroke-width="1"/><rect x="1" y="1" width="9" height="2.2" fill="#3aaef0"/><rect x="3.1" y="3.7" width="2.3" height="1.8" fill="#efb645"/><rect x="3.1" y="6.1" width="2.3" height="1.8" fill="#efb645"/><rect x="3.1" y="8.5" width="2.3" height="1.5" fill="#efb645"/><path d="M1 3.35H10" stroke="#9a9a9a" stroke-width="0.5"/><path d="M1 5.8H10M1 8.2H10" stroke="#bdbdbd" stroke-width="0.55"/><path d="M2.85 1V10M5.65 1V10M8.2 1V10" stroke="#a9a9a9" stroke-width="0.5"/></svg>
<div class="rtxt" style="top:142.40px;left:17.9px">date</div>
<div class="rtyp" style="top:142.40px;right:4.2px">Object</div>
<div class="idx" style="top:160.26px;height:18px"><span>Indexes (1)</span></div>
<div class="itri" style="left:94.5px;top:165.256px"></div>
<div class="strip" style="top:178.256px;background:#f6b86c"></div>
</div>
<div class="tbl" style="left:865.25px;top:327.85px;width:109.0px;height:184.55599999999998px;">
<div class="hdr" style="background:#caa1e2;height:16.5px"></div>
<svg width="11" height="11" viewBox="0 0 11 11" style="position:absolute;left:4.5px;top:3.2px"><rect x="0.5" y="0.5" width="10" height="10" fill="#fff" stroke="#8f8f8f" stroke-width="1"/><rect x="1" y="1" width="9" height="2.2" fill="#3aaef0"/><path d="M1 3.35H10" stroke="#9a9a9a" stroke-width="0.5"/><path d="M1 5.8H10M1 8.2H10" stroke="#c4c4c4" stroke-width="0.55"/><path d="M2.85 1V10M5.65 1V10M8.2 1V10" stroke="#b4b4b4" stroke-width="0.5"/></svg>
<div class="htxt" style="left:22.5px;top:0px;line-height:17.0px">inspections</div>
<div class="tri" style="left:93.0px;top:5px;border-top-color:#765e84"></div>
<svg width="11.6" height="11.4" viewBox="0 0 11 11" preserveAspectRatio="none" style="position:absolute;left:2.3px;top:20.7px"><rect x="0.5" y="0.5" width="10" height="10" fill="#fff" stroke="#8f8f8f" stroke-width="1"/><rect x="1" y="1" width="9" height="2.2" fill="#3aaef0"/><rect x="3.1" y="3.7" width="2.3" height="1.8" fill="#efb645"/><rect x="3.1" y="6.1" width="2.3" height="1.8" fill="#efb645"/><rect x="3.1" y="8.5" width="2.3" height="1.5" fill="#efb645"/><path d="M1 3.35H10" stroke="#9a9a9a" stroke-width="0.5"/><path d="M1 5.8H10M1 8.2H10" stroke="#bdbdbd" stroke-width="0.55"/><path d="M2.85 1V10M5.65 1V10M8.2 1V10" stroke="#a9a9a9" stroke-width="0.5"/></svg>
<div class="rtxt" style="top:17.40px;left:17.9px">_id</div>
<div class="rtyp" style="top:17.40px;right:4.2px">Object</div>
<svg width="11.6" height="11.4" viewBox="0 0 11 11" preserveAspectRatio="none" style="position:absolute;left:2.3px;top:38.56px"><rect x="0.5" y="0.5" width="10" height="10" fill="#fff" stroke="#8f8f8f" stroke-width="1"/><rect x="1" y="1" width="9" height="2.2" fill="#3aaef0"/><rect x="3.1" y="3.7" width="2.3" height="1.8" fill="#efb645"/><rect x="3.1" y="6.1" width="2.3" height="1.8" fill="#efb645"/><rect x="3.1" y="8.5" width="2.3" height="1.5" fill="#efb645"/><path d="M1 3.35H10" stroke="#9a9a9a" stroke-width="0.5"/><path d="M1 5.8H10M1 8.2H10" stroke="#bdbdbd" stroke-width="0.55"/><path d="M2.85 1V10M5.65 1V10M8.2 1V10" stroke="#a9a9a9" stroke-width="0.5"/></svg>
<div class="rtxt" style="top:35.26px;left:17.9px">id</div>
<div class="rtyp" style="top:35.26px;right:4.2px">String</div>
<svg width="11.6" height="11.4" viewBox="0 0 11 11" preserveAspectRatio="none" style="position:absolute;left:2.3px;top:56.41px"><rect x="0.5" y="0.5" width="10" height="10" fill="#fff" stroke="#8f8f8f" stroke-width="1"/><rect x="1" y="1" width="9" height="2.2" fill="#3aaef0"/><rect x="3.1" y="3.7" width="2.3" height="1.8" fill="#efb645"/><rect x="3.1" y="6.1" width="2.3" height="1.8" fill="#efb645"/><rect x="3.1" y="8.5" width="2.3" height="1.5" fill="#efb645"/><path d="M1 3.35H10" stroke="#9a9a9a" stroke-width="0.5"/><path d="M1 5.8H10M1 8.2H10" stroke="#bdbdbd" stroke-width="0.55"/><path d="M2.85 1V10M5.65 1V10M8.2 1V10" stroke="#a9a9a9" stroke-width="0.5"/></svg>
<div class="rtxt" style="top:53.11px;left:17.9px">certif...number</div>
<svg width="11.6" height="11.4" viewBox="0 0 11 11" preserveAspectRatio="none" style="position:absolute;left:2.3px;top:74.27px"><rect x="0.5" y="0.5" width="10" height="10" fill="#fff" stroke="#8f8f8f" stroke-width="1"/><rect x="1" y="1" width="9" height="2.2" fill="#3aaef0"/><rect x="3.1" y="3.7" width="2.3" height="1.8" fill="#efb645"/><rect x="3.1" y="6.1" width="2.3" height="1.8" fill="#efb645"/><rect x="3.1" y="8.5" width="2.3" height="1.5" fill="#efb645"/><path d="M1 3.35H10" stroke="#9a9a9a" stroke-width="0.5"/><path d="M1 5.8H10M1 8.2H10" stroke="#bdbdbd" stroke-width="0.55"/><path d="M2.85 1V10M5.65 1V10M8.2 1V10" stroke="#a9a9a9" stroke-width="0.5"/></svg>
<div class="rtxt" style="top:70.97px;left:17.9px">business_name</div>
<svg width="11.6" height="11.4" viewBox="0 0 11 11" preserveAspectRatio="none" style="position:absolute;left:2.3px;top:92.13px"><rect x="0.5" y="0.5" width="10" height="10" fill="#fff" stroke="#8f8f8f" stroke-width="1"/><rect x="1" y="1" width="9" height="2.2" fill="#3aaef0"/><rect x="3.1" y="3.7" width="2.3" height="1.8" fill="#efb645"/><rect x="3.1" y="6.1" width="2.3" height="1.8" fill="#efb645"/><rect x="3.1" y="8.5" width="2.3" height="1.5" fill="#efb645"/><path d="M1 3.35H10" stroke="#9a9a9a" stroke-width="0.5"/><path d="M1 5.8H10M1 8.2H10" stroke="#bdbdbd" stroke-width="0.55"/><path d="M2.85 1V10M5.65 1V10M8.2 1V10" stroke="#a9a9a9" stroke-width="0.5"/></svg>
<div class="rtxt" style="top:88.83px;left:17.9px">date</div>
<div class="rtyp" style="top:88.83px;right:4.2px">String</div>
<svg width="11.6" height="11.4" viewBox="0 0 11 11" preserveAspectRatio="none" style="position:absolute;left:2.3px;top:109.98px"><rect x="0.5" y="0.5" width="10" height="10" fill="#fff" stroke="#8f8f8f" stroke-width="1"/><rect x="1" y="1" width="9" height="2.2" fill="#3aaef0"/><rect x="3.1" y="3.7" width="2.3" height="1.8" fill="#efb645"/><rect x="3.1" y="6.1" width="2.3" height="1.8" fill="#efb645"/><rect x="3.1" y="8.5" width="2.3" height="1.5" fill="#efb645"/><path d="M1 3.35H10" stroke="#9a9a9a" stroke-width="0.5"/><path d="M1 5.8H10M1 8.2H10" stroke="#bdbdbd" stroke-width="0.55"/><path d="M2.85 1V10M5.65 1V10M8.2 1V10" stroke="#a9a9a9" stroke-width="0.5"/></svg>
<div class="rtxt" style="top:106.69px;left:17.9px">result</div>
<div class="rtyp" style="top:106.69px;right:4.2px">String</div>
<svg width="11.6" height="11.4" viewBox="0 0 11 11" preserveAspectRatio="none" style="position:absolute;left:2.3px;top:127.84px"><rect x="0.5" y="0.5" width="10" height="10" fill="#fff" stroke="#8f8f8f" stroke-width="1"/><rect x="1" y="1" width="9" height="2.2" fill="#3aaef0"/><rect x="3.1" y="3.7" width="2.3" height="1.8" fill="#efb645"/><rect x="3.1" y="6.1" width="2.3" height="1.8" fill="#efb645"/><rect x="3.1" y="8.5" width="2.3" height="1.5" fill="#efb645"/><path d="M1 3.35H10" stroke="#9a9a9a" stroke-width="0.5"/><path d="M1 5.8H10M1 8.2H10" stroke="#bdbdbd" stroke-width="0.55"/><path d="M2.85 1V10M5.65 1V10M8.2 1V10" stroke="#a9a9a9" stroke-width="0.5"/></svg>
<div class="rtxt" style="top:124.54px;left:17.9px">sector</div>
<div class="rtyp" style="top:124.54px;right:4.2px">String</div>
<svg width="11.6" height="11.4" viewBox="0 0 11 11" preserveAspectRatio="none" style="position:absolute;left:2.3px;top:145.7px"><rect x="0.5" y="0.5" width="10" height="10" fill="#fff" stroke="#8f8f8f" stroke-width="1"/><rect x="1" y="1" width="9" height="2.2" fill="#3aaef0"/><rect x="3.1" y="3.7" width="2.3" height="1.8" fill="#efb645"/><rect x="3.1" y="6.1" width="2.3" height="1.8" fill="#efb645"/><rect x="3.1" y="8.5" width="2.3" height="1.5" fill="#efb645"/><path d="M1 3.35H10" stroke="#9a9a9a" stroke-width="0.5"/><path d="M1 5.8H10M1 8.2H10" stroke="#bdbdbd" stroke-width="0.55"/><path d="M2.85 1V10M5.65 1V10M8.2 1V10" stroke="#a9a9a9" stroke-width="0.5"/></svg>
<div class="rtxt" style="top:142.40px;left:17.9px">address</div>
<div class="rtyp" style="top:142.40px;right:4.2px">Object</div>
<div class="idx" style="top:160.26px;height:18px"><span>Indexes (1)</span></div>
<div class="itri" style="left:94.5px;top:165.256px"></div>
<div class="strip" style="top:178.256px;background:#caa1e2"></div>
</div>
<div class="tbl" style="left:743.75px;top:545.55px;width:176.5px;height:255.20000000000005px;">
<div class="hdr" style="background:#f3df73;height:16.5px"></div>
<svg width="11" height="11" viewBox="0 0 11 11" style="position:absolute;left:4.5px;top:3.2px"><rect x="0.5" y="0.5" width="10" height="10" fill="#fff" stroke="#8f8f8f" stroke-width="1"/><rect x="1" y="1" width="9" height="2.2" fill="#3aaef0"/><path d="M1 3.35H10" stroke="#9a9a9a" stroke-width="0.5"/><path d="M1 5.8H10M1 8.2H10" stroke="#c4c4c4" stroke-width="0.55"/><path d="M2.85 1V10M5.65 1V10M8.2 1V10" stroke="#b4b4b4" stroke-width="0.5"/></svg>
<div class="htxt" style="left:22.5px;top:0px;line-height:17.0px">trips</div>
<div class="tri" style="left:160.5px;top:5px;border-top-color:#8c8143"></div>
<svg width="11.6" height="11.4" viewBox="0 0 11 11" preserveAspectRatio="none" style="position:absolute;left:2.3px;top:20.7px"><rect x="0.5" y="0.5" width="10" height="10" fill="#fff" stroke="#8f8f8f" stroke-width="1"/><rect x="1" y="1" width="9" height="2.2" fill="#3aaef0"/><rect x="3.1" y="3.7" width="2.3" height="1.8" fill="#efb645"/><rect x="3.1" y="6.1" width="2.3" height="1.8" fill="#efb645"/><rect x="3.1" y="8.5" width="2.3" height="1.5" fill="#efb645"/><path d="M1 3.35H10" stroke="#9a9a9a" stroke-width="0.5"/><path d="M1 5.8H10M1 8.2H10" stroke="#bdbdbd" stroke-width="0.55"/><path d="M2.85 1V10M5.65 1V10M8.2 1V10" stroke="#a9a9a9" stroke-width="0.5"/></svg>
<div class="rtxt" style="top:17.40px;left:17.9px">_id</div>
<div class="rtyp" style="top:17.40px;right:4.2px">Object</div>
<svg width="11.6" height="11.4" viewBox="0 0 11 11" preserveAspectRatio="none" style="position:absolute;left:2.3px;top:38.56px"><rect x="0.5" y="0.5" width="10" height="10" fill="#fff" stroke="#8f8f8f" stroke-width="1"/><rect x="1" y="1" width="9" height="2.2" fill="#3aaef0"/><rect x="3.1" y="3.7" width="2.3" height="1.8" fill="#efb645"/><rect x="3.1" y="6.1" width="2.3" height="1.8" fill="#efb645"/><rect x="3.1" y="8.5" width="2.3" height="1.5" fill="#efb645"/><path d="M1 3.35H10" stroke="#9a9a9a" stroke-width="0.5"/><path d="M1 5.8H10M1 8.2H10" stroke="#bdbdbd" stroke-width="0.55"/><path d="M2.85 1V10M5.65 1V10M8.2 1V10" stroke="#a9a9a9" stroke-width="0.5"/></svg>
<div class="rtxt" style="top:35.26px;left:17.9px">tripduration</div>
<div class="rtyp" style="top:35.26px;right:4.2px">Number</div>
<svg width="11.6" height="11.4" viewBox="0 0 11 11" preserveAspectRatio="none" style="position:absolute;left:2.3px;top:56.41px"><rect x="0.5" y="0.5" width="10" height="10" fill="#fff" stroke="#8f8f8f" stroke-width="1"/><rect x="1" y="1" width="9" height="2.2" fill="#3aaef0"/><rect x="3.1" y="3.7" width="2.3" height="1.8" fill="#efb645"/><rect x="3.1" y="6.1" width="2.3" height="1.8" fill="#efb645"/><rect x="3.1" y="8.5" width="2.3" height="1.5" fill="#efb645"/><path d="M1 3.35H10" stroke="#9a9a9a" stroke-width="0.5"/><path d="M1 5.8H10M1 8.2H10" stroke="#bdbdbd" stroke-width="0.55"/><path d="M2.85 1V10M5.65 1V10M8.2 1V10" stroke="#a9a9a9" stroke-width="0.5"/></svg>
<div class="rtxt" style="top:53.11px;left:17.9px">start station id</div>
<div class="rtyp" style="top:53.11px;right:4.2px">Number</div>
<svg width="11.6" height="11.4" viewBox="0 0 11 11" preserveAspectRatio="none" style="position:absolute;left:2.3px;top:74.27px"><rect x="0.5" y="0.5" width="10" height="10" fill="#fff" stroke="#8f8f8f" stroke-width="1"/><rect x="1" y="1" width="9" height="2.2" fill="#3aaef0"/><rect x="3.1" y="3.7" width="2.3" height="1.8" fill="#efb645"/><rect x="3.1" y="6.1" width="2.3" height="1.8" fill="#efb645"/><rect x="3.1" y="8.5" width="2.3" height="1.5" fill="#efb645"/><path d="M1 3.35H10" stroke="#9a9a9a" stroke-width="0.5"/><path d="M1 5.8H10M1 8.2H10" stroke="#bdbdbd" stroke-width="0.55"/><path d="M2.85 1V10M5.65 1V10M8.2 1V10" stroke="#a9a9a9" stroke-width="0.5"/></svg>
<div class="rtxt" style="top:70.97px;left:17.9px">start station name</div>
<div class="rtyp" style="top:70.97px;right:4.2px">String</div>
<svg width="11.6" height="11.4" viewBox="0 0 11 11" preserveAspectRatio="none" style="position:absolute;left:2.3px;top:92.13px"><rect x="0.5" y="0.5" width="10" height="10" fill="#fff" stroke="#8f8f8f" stroke-width="1"/><rect x="1" y="1" width="9" height="2.2" fill="#3aaef0"/><rect x="3.1" y="3.7" width="2.3" height="1.8" fill="#efb645"/><rect x="3.1" y="6.1" width="2.3" height="1.8" fill="#efb645"/><rect x="3.1" y="8.5" width="2.3" height="1.5" fill="#efb645"/><path d="M1 3.35H10" stroke="#9a9a9a" stroke-width="0.5"/><path d="M1 5.8H10M1 8.2H10" stroke="#bdbdbd" stroke-width="0.55"/><path d="M2.85 1V10M5.65 1V10M8.2 1V10" stroke="#a9a9a9" stroke-width="0.5"/></svg>
<div class="rtxt" style="top:88.83px;left:17.9px">end station id</div>
<div class="rtyp" style="top:88.83px;right:4.2px">Number</div>
<svg width="11.6" height="11.4" viewBox="0 0 11 11" preserveAspectRatio="none" style="position:absolute;left:2.3px;top:109.98px"><rect x="0.5" y="0.5" width="10" height="10" fill="#fff" stroke="#8f8f8f" stroke-width="1"/><rect x="1" y="1" width="9" height="2.2" fill="#3aaef0"/><rect x="3.1" y="3.7" width="2.3" height="1.8" fill="#efb645"/><rect x="3.1" y="6.1" width="2.3" height="1.8" fill="#efb645"/><rect x="3.1" y="8.5" width="2.3" height="1.5" fill="#efb645"/><path d="M1 3.35H10" stroke="#9a9a9a" stroke-width="0.5"/><path d="M1 5.8H10M1 8.2H10" stroke="#bdbdbd" stroke-width="0.55"/><path d="M2.85 1V10M5.65 1V10M8.2 1V10" stroke="#a9a9a9" stroke-width="0.5"/></svg>
<div class="rtxt" style="top:106.69px;left:17.9px">end station name</div>
<div class="rtyp" style="top:106.69px;right:4.2px">String</div>
<svg width="11.6" height="11.4" viewBox="0 0 11 11" preserveAspectRatio="none" style="position:absolute;left:2.3px;top:127.84px"><rect x="0.5" y="0.5" width="10" height="10" fill="#fff" stroke="#8f8f8f" stroke-width="1"/><rect x="1" y="1" width="9" height="2.2" fill="#3aaef0"/><rect x="3.1" y="3.7" width="2.3" height="1.8" fill="#efb645"/><rect x="3.1" y="6.1" width="2.3" height="1.8" fill="#efb645"/><rect x="3.1" y="8.5" width="2.3" height="1.5" fill="#efb645"/><path d="M1 3.35H10" stroke="#9a9a9a" stroke-width="0.5"/><path d="M1 5.8H10M1 8.2H10" stroke="#bdbdbd" stroke-width="0.55"/><path d="M2.85 1V10M5.65 1V10M8.2 1V10" stroke="#a9a9a9" stroke-width="0.5"/></svg>
<div class="rtxt" style="top:124.54px;left:17.9px">bikeid</div>
<div class="rtyp" style="top:124.54px;right:4.2px">Number</div>
<svg width="11.6" height="11.4" viewBox="0 0 11 11" preserveAspectRatio="none" style="position:absolute;left:2.3px;top:145.7px"><rect x="0.5" y="0.5" width="10" height="10" fill="#fff" stroke="#8f8f8f" stroke-width="1"/><rect x="1" y="1" width="9" height="2.2" fill="#3aaef0"/><rect x="3.1" y="3.7" width="2.3" height="1.8" fill="#efb645"/><rect x="3.1" y="6.1" width="2.3" height="1.8" fill="#efb645"/><rect x="3.1" y="8.5" width="2.3" height="1.5" fill="#efb645"/><path d="M1 3.35H10" stroke="#9a9a9a" stroke-width="0.5"/><path d="M1 5.8H10M1 8.2H10" stroke="#bdbdbd" stroke-width="0.55"/><path d="M2.85 1V10M5.65 1V10M8.2 1V10" stroke="#a9a9a9" stroke-width="0.5"/></svg>
<div class="rtxt" style="top:142.40px;left:17.9px">usertype</div>
<div class="rtyp" style="top:142.40px;right:4.2px">String</div>
<svg width="11.6" height="11.4" viewBox="0 0 11 11" preserveAspectRatio="none" style="position:absolute;left:2.3px;top:163.56px"><rect x="0.5" y="0.5" width="10" height="10" fill="#fff" stroke="#8f8f8f" stroke-width="1"/><rect x="1" y="1" width="9" height="2.2" fill="#3aaef0"/><rect x="3.1" y="3.7" width="2.3" height="1.8" fill="#efb645"/><rect x="3.1" y="6.1" width="2.3" height="1.8" fill="#efb645"/><rect x="3.1" y="8.5" width="2.3" height="1.5" fill="#efb645"/><path d="M1 3.35H10" stroke="#9a9a9a" stroke-width="0.5"/><path d="M1 5.8H10M1 8.2H10" stroke="#bdbdbd" stroke-width="0.55"/><path d="M2.85 1V10M5.65 1V10M8.2 1V10" stroke="#a9a9a9" stroke-width="0.5"/></svg>
<div class="rtxt" style="top:160.26px;left:17.9px">birth year</div>
<div class="rtyp" style="top:160.26px;right:4.2px">Number</div>
<svg width="11.6" height="11.4" viewBox="0 0 11 11" preserveAspectRatio="none" style="position:absolute;left:2.3px;top:181.41px"><rect x="0.5" y="0.5" width="10" height="10" fill="#fff" stroke="#8f8f8f" stroke-width="1"/><rect x="1" y="1" width="9" height="2.2" fill="#3aaef0"/><rect x="3.1" y="3.7" width="2.3" height="1.8" fill="#efb645"/><rect x="3.1" y="6.1" width="2.3" height="1.8" fill="#efb645"/><rect x="3.1" y="8.5" width="2.3" height="1.5" fill="#efb645"/><path d="M1 3.35H10" stroke="#9a9a9a" stroke-width="0.5"/><path d="M1 5.8H10M1 8.2H10" stroke="#bdbdbd" stroke-width="0.55"/><path d="M2.85 1V10M5.65 1V10M8.2 1V10" stroke="#a9a9a9" stroke-width="0.5"/></svg>
<div class="rtxt" style="top:178.11px;left:17.9px">start station location</div>
<div class="rtyp" style="top:178.11px;right:4.2px">Object</div>
<svg width="11.6" height="11.4" viewBox="0 0 11 11" preserveAspectRatio="none" style="position:absolute;left:2.3px;top:199.27px"><rect x="0.5" y="0.5" width="10" height="10" fill="#fff" stroke="#8f8f8f" stroke-width="1"/><rect x="1" y="1" width="9" height="2.2" fill="#3aaef0"/><rect x="3.1" y="3.7" width="2.3" height="1.8" fill="#efb645"/><rect x="3.1" y="6.1" width="2.3" height="1.8" fill="#efb645"/><rect x="3.1" y="8.5" width="2.3" height="1.5" fill="#efb645"/><path d="M1 3.35H10" stroke="#9a9a9a" stroke-width="0.5"/><path d="M1 5.8H10M1 8.2H10" stroke="#bdbdbd" stroke-width="0.55"/><path d="M2.85 1V10M5.65 1V10M8.2 1V10" stroke="#a9a9a9" stroke-width="0.5"/></svg>
<div class="rtxt" style="top:195.97px;left:17.9px">end station location</div>
<div class="rtyp" style="top:195.97px;right:4.2px">Object</div>
<svg width="11.6" height="11.4" viewBox="0 0 11 11" preserveAspectRatio="none" style="position:absolute;left:2.3px;top:217.13px"><rect x="0.5" y="0.5" width="10" height="10" fill="#fff" stroke="#8f8f8f" stroke-width="1"/><rect x="1" y="1" width="9" height="2.2" fill="#3aaef0"/><rect x="3.1" y="3.7" width="2.3" height="1.8" fill="#efb645"/><rect x="3.1" y="6.1" width="2.3" height="1.8" fill="#efb645"/><rect x="3.1" y="8.5" width="2.3" height="1.5" fill="#efb645"/><path d="M1 3.35H10" stroke="#9a9a9a" stroke-width="0.5"/><path d="M1 5.8H10M1 8.2H10" stroke="#bdbdbd" stroke-width="0.55"/><path d="M2.85 1V10M5.65 1V10M8.2 1V10" stroke="#a9a9a9" stroke-width="0.5"/></svg>
<div class="rtxt" style="top:213.83px;left:17.9px">start time</div>
<div class="rtyp" style="top:213.83px;right:4.2px">Object</div>
<svg width="11.6" height="11.4" viewBox="0 0 11 11" preserveAspectRatio="none" style="position:absolute;left:2.3px;top:234.98px"><rect x="0.5" y="0.5" width="10" height="10" fill="#fff" stroke="#8f8f8f" stroke-width="1"/><rect x="1" y="1" width="9" height="2.2" fill="#3aaef0"/><rect x="3.1" y="3.7" width="2.3" height="1.8" fill="#efb645"/><rect x="3.1" y="6.1" width="2.3" height="1.8" fill="#efb645"/><rect x="3.1" y="8.5" width="2.3" height="1.5" fill="#efb645"/><path d="M1 3.35H10" stroke="#9a9a9a" stroke-width="0.5"/><path d="M1 5.8H10M1 8.2H10" stroke="#bdbdbd" stroke-width="0.55"/><path d="M2.85 1V10M5.65 1V10M8.2 1V10" stroke="#a9a9a9" stroke-width="0.5"/></svg>
<div class="rtxt" style="top:231.68px;left:17.9px">stop time</div>
<div class="rtyp" style="top:231.68px;right:4.2px">Object</div>
</div>
<div class="abs" style="left:1056px;top:110px;width:1px;height:672px;background:#bcbcbc"></div>
<div class="abs" style="left:1057px;top:110px;width:229px;height:672px;background:#ececec"></div>
<div class="abs" style="left:1057px;top:133.5px;width:229px;height:1px;background:#d3d3d3"></div>
<svg class="abs" style="left:1150px;top:115px" width="13" height="14" viewBox="0 0 13 14">
 <path d="M0.8 0.8 H8.2 L12 4.6 V13.2 H0.8 Z" fill="none" stroke="#1a82f7" stroke-width="1.5" stroke-linejoin="round"/>
 <path d="M8.2 0.8 V4.6 H12" fill="none" stroke="#1a82f7" stroke-width="0.9"/>
</svg>
<svg class="abs" style="left:1180px;top:115px" width="14" height="13" viewBox="0 0 14 13">
 <rect x="0.6" y="0.6" width="6" height="4.2" rx="0.5" fill="none" stroke="#444" stroke-width="1.1"/>
 <rect x="0.6" y="8.2" width="5" height="4.2" rx="0.5" fill="none" stroke="#444" stroke-width="1.1"/>
 <rect x="8.6" y="8.2" width="4.8" height="4.2" rx="0.5" fill="none" stroke="#444" stroke-width="1.1"/>
 <path d="M3.6 4.8 V8.2 M6.6 2.7 H11 V8.2" fill="none" stroke="#444" stroke-width="1.1"/>
</svg>
<div class="abs" style="left:1061.8px;top:139px;font-size:12px;color:#555;line-height:13px">Diagram</div>
<div class="abs" style="left:1000px;width:117.8px;text-align:right;top:159.0px;font-size:12px;color:#555;line-height:13px">name</div>
<div class="abs" style="left:1000px;width:117.8px;text-align:right;top:178.79999999999998px;font-size:12px;color:#555;line-height:13px">font</div>
<div class="abs" style="left:1000px;width:117.8px;text-align:right;top:198.7px;font-size:12px;color:#555;line-height:13px">gamma</div>
<div class="abs" style="left:1000px;width:117.8px;text-align:right;top:218.2px;font-size:12px;color:#555;line-height:13px">style</div>
<div class="abs" style="left:1000px;width:117.8px;text-align:right;top:237.79999999999998px;font-size:12px;color:#555;line-height:13px">style_links</div>
<div class="abs" style="left:1124.7px;top:157px;width:155px;height:15.5px;background:#fff"></div>
<div class="abs" style="left:1126px;top:158.8px;font-size:12px;color:#1e1e1e;line-height:13px;letter-spacing:-0.15px">MongoDB Diagram</div>
<div class="abs" style="left:1127px;top:178.6px;font-size:12px;color:#454545;line-height:13px">Default</div>
<svg class="abs" style="left:1268px;top:177.5px" width="13" height="13" viewBox="0 0 13 13">
 <path d="M0.5 12.5 L1 9.5 L9 1.5 L11.5 4 L3.5 12 Z" fill="#5e5e5e"/>
 <path d="M9.8 0.7 L10.6 0 L13 2.4 L12.3 3.2 Z" fill="#5e5e5e"/>
</svg>
<div class="abs" style="left:1124.5px;top:198.6px;font-size:12px;color:#1e1e1e;line-height:13px">Light</div>
<svg class="abs" style="left:1153.3px;top:199.1px" width="7" height="10" viewBox="0 0 7 10"><path d="M1 3.6 L3.5 1 L6 3.6 M1 6.4 L3.5 9 L6 6.4" fill="none" stroke="#222" stroke-width="1.2"/></svg>
<div class="abs" style="left:1124.5px;top:218.1px;font-size:12px;color:#1e1e1e;line-height:13px">Rounded</div>
<svg class="abs" style="left:1174.5px;top:218.6px" width="7" height="10" viewBox="0 0 7 10"><path d="M1 3.6 L3.5 1 L6 3.6 M1 6.4 L3.5 9 L6 6.4" fill="none" stroke="#222" stroke-width="1.2"/></svg>
<div class="abs" style="left:1124.5px;top:237.6px;font-size:12px;color:#1e1e1e;line-height:13px">Default</div>
<svg class="abs" style="left:1164px;top:238.1px" width="7" height="10" viewBox="0 0 7 10"><path d="M1 3.6 L3.5 1 L6 3.6 M1 6.4 L3.5 9 L6 6.4" fill="none" stroke="#222" stroke-width="1.2"/></svg>
<div class="abs" style="left:1057px;top:257.5px;width:227px;height:1px;background:#c9c9c9"></div>
<div class="abs" style="left:1061.8px;top:261.5px;font-size:12px;color:#444;line-height:13px">Control</div>
<div class="abs" style="left:1141.3px;top:278.2px;width:15.2px;height:15.2px;border-radius:50%;background:#fff;border:1px solid #b9b9b9"></div>
<div class="abs" style="left:1144.2px;top:281.1px;width:9.4px;height:9.4px;border-radius:50%;background:#fff;border:0.5px solid #cfcfcf"></div>
<div class="abs" style="left:1161.0px;top:280.2px;width:11.2px;height:11.2px;border-radius:50%;background:#c8c8c8;border:0.5px solid rgba(0,0,0,0.12)"></div>
<div class="abs" style="left:1178.8000000000002px;top:280.2px;width:11.2px;height:11.2px;border-radius:50%;background:#c28ee0;border:0.5px solid rgba(0,0,0,0.12)"></div>
<div class="abs" style="left:1196.9px;top:280.2px;width:11.2px;height:11.2px;border-radius:50%;background:#4f9ef8;border:0.5px solid rgba(0,0,0,0.12)"></div>
<div class="abs" style="left:1214.8000000000002px;top:280.2px;width:11.2px;height:11.2px;border-radius:50%;background:#f2d94a;border:0.5px solid rgba(0,0,0,0.12)"></div>
<div class="abs" style="left:1232.4px;top:280.2px;width:11.2px;height:11.2px;border-radius:50%;background:#a7d14a;border:0.5px solid rgba(0,0,0,0.12)"></div>
<div class="abs" style="left:1250.6000000000001px;top:280.2px;width:11.2px;height:11.2px;border-radius:50%;background:#f4a445;border:0.5px solid rgba(0,0,0,0.12)"></div>
<div class="abs" style="left:1268.3000000000002px;top:280.2px;width:11.2px;height:11.2px;border-radius:50%;background:#f6625a;border:0.5px solid rgba(0,0,0,0.12)"></div>
<div class="abs" style="left:1057px;top:528px;width:229px;height:1.2px;background:#d0d0d0"></div>
<div class="abs" style="left:1057px;top:552.5px;width:229px;height:1px;background:#d0d0d0"></div>
<svg class="abs" style="left:1149px;top:534px" width="14" height="14" viewBox="0 0 14 14">
 <circle cx="7" cy="7" r="6" fill="none" stroke="#1a82f7" stroke-width="1.4"/>
 <path d="M9.8 4.2 L7.8 7.8 L4.2 9.8 L6.2 6.2 Z" fill="#1a82f7"/>
</svg>
<svg class="abs" style="left:1180px;top:534.5px" width="13" height="13" viewBox="0 0 13 13">
 <circle cx="6.5" cy="6.5" r="5.8" fill="none" stroke="#444" stroke-width="1.1"/>
 <path d="M6.3 2.8 V6.8 H9.5" fill="none" stroke="#444" stroke-width="1.1"/>
</svg>
<div class="abs" style="left:1057px;top:553.5px;width:229px;height:205.5px;background:#fff"></div>
<div class="abs" style="left:1136.6px;top:610px;width:19.40000000000009px;height:15px;background:#d6d6d6;border:0.8px solid rgba(0,0,0,0.18)"></div>
<div class="abs" style="left:1157.8px;top:611px;width:16.90000000000009px;height:14.299999999999955px;background:#c5de75;border:0.8px solid rgba(0,0,0,0.18)"></div>
<div class="abs" style="left:1176.5px;top:614.3px;width:23.700000000000045px;height:11.700000000000045px;background:#84b7f3;border:0.8px solid rgba(0,0,0,0.18)"></div>
<div class="abs" style="left:1136.6px;top:627px;width:30.0px;height:76.70000000000005px;background:#f88982;border:0.8px solid rgba(0,0,0,0.18)"></div>
<div class="abs" style="left:1170px;top:627px;width:17.799999999999955px;height:17.399999999999977px;background:#f6b86c;border:0.8px solid rgba(0,0,0,0.18)"></div>
<div class="abs" style="left:1187.8px;top:627px;width:17.700000000000045px;height:17.399999999999977px;background:#caa2e3;border:0.8px solid rgba(0,0,0,0.18)"></div>
<div class="abs" style="left:1170px;top:647.2px;width:28.40000000000009px;height:27.199999999999932px;background:#f3df73;border:0.8px solid rgba(0,0,0,0.18)"></div>
<div class="abs" style="left:1092px;top:608.6px;width:126px;height:61.8px;border:1.7px solid #f54848"></div>
<div class="abs" style="left:1057px;top:759px;width:229px;height:1px;background:#d3d3d3"></div>
<div class="abs" style="left:1066px;top:767.5px;width:178.5px;height:3px;border-radius:2px;background:#dcdcdc"></div>
<div class="abs" style="left:1066px;top:767.5px;width:41px;height:3px;border-radius:2px;background:#1a82f7"></div>
<div class="abs" style="left:1098px;top:760.5px;width:17px;height:17px;border-radius:50%;background:#fff;box-shadow:0 0.5px 1.5px rgba(0,0,0,0.35),0 0 0 0.5px rgba(0,0,0,0.12)"></div>
<svg class="abs" style="left:1263.5px;top:763.5px" width="13" height="12" viewBox="0 0 13 12">
 <path d="M0.6 3.5 V0.6 H3.5 M9.5 0.6 H12.4 V3.5 M12.4 8.5 V11.4 H9.5 M3.5 11.4 H0.6 V8.5" fill="none" stroke="#444" stroke-width="1.1"/>
 <rect x="3" y="3" width="7" height="6" fill="none" stroke="#444" stroke-width="1.1"/>
</svg>
<div class="abs" style="left:0;top:782px;width:1286px;height:22px;background:linear-gradient(#e6e6e6,#d2d2d2 45%,#b3b3b3);border-top:1px solid #b0b0b0"></div>
<div class="abs" style="left:6px;top:786.5px;font-size:11.4px;color:#2a2a2a;line-height:13px">Ready</div>
</div></body></html>
